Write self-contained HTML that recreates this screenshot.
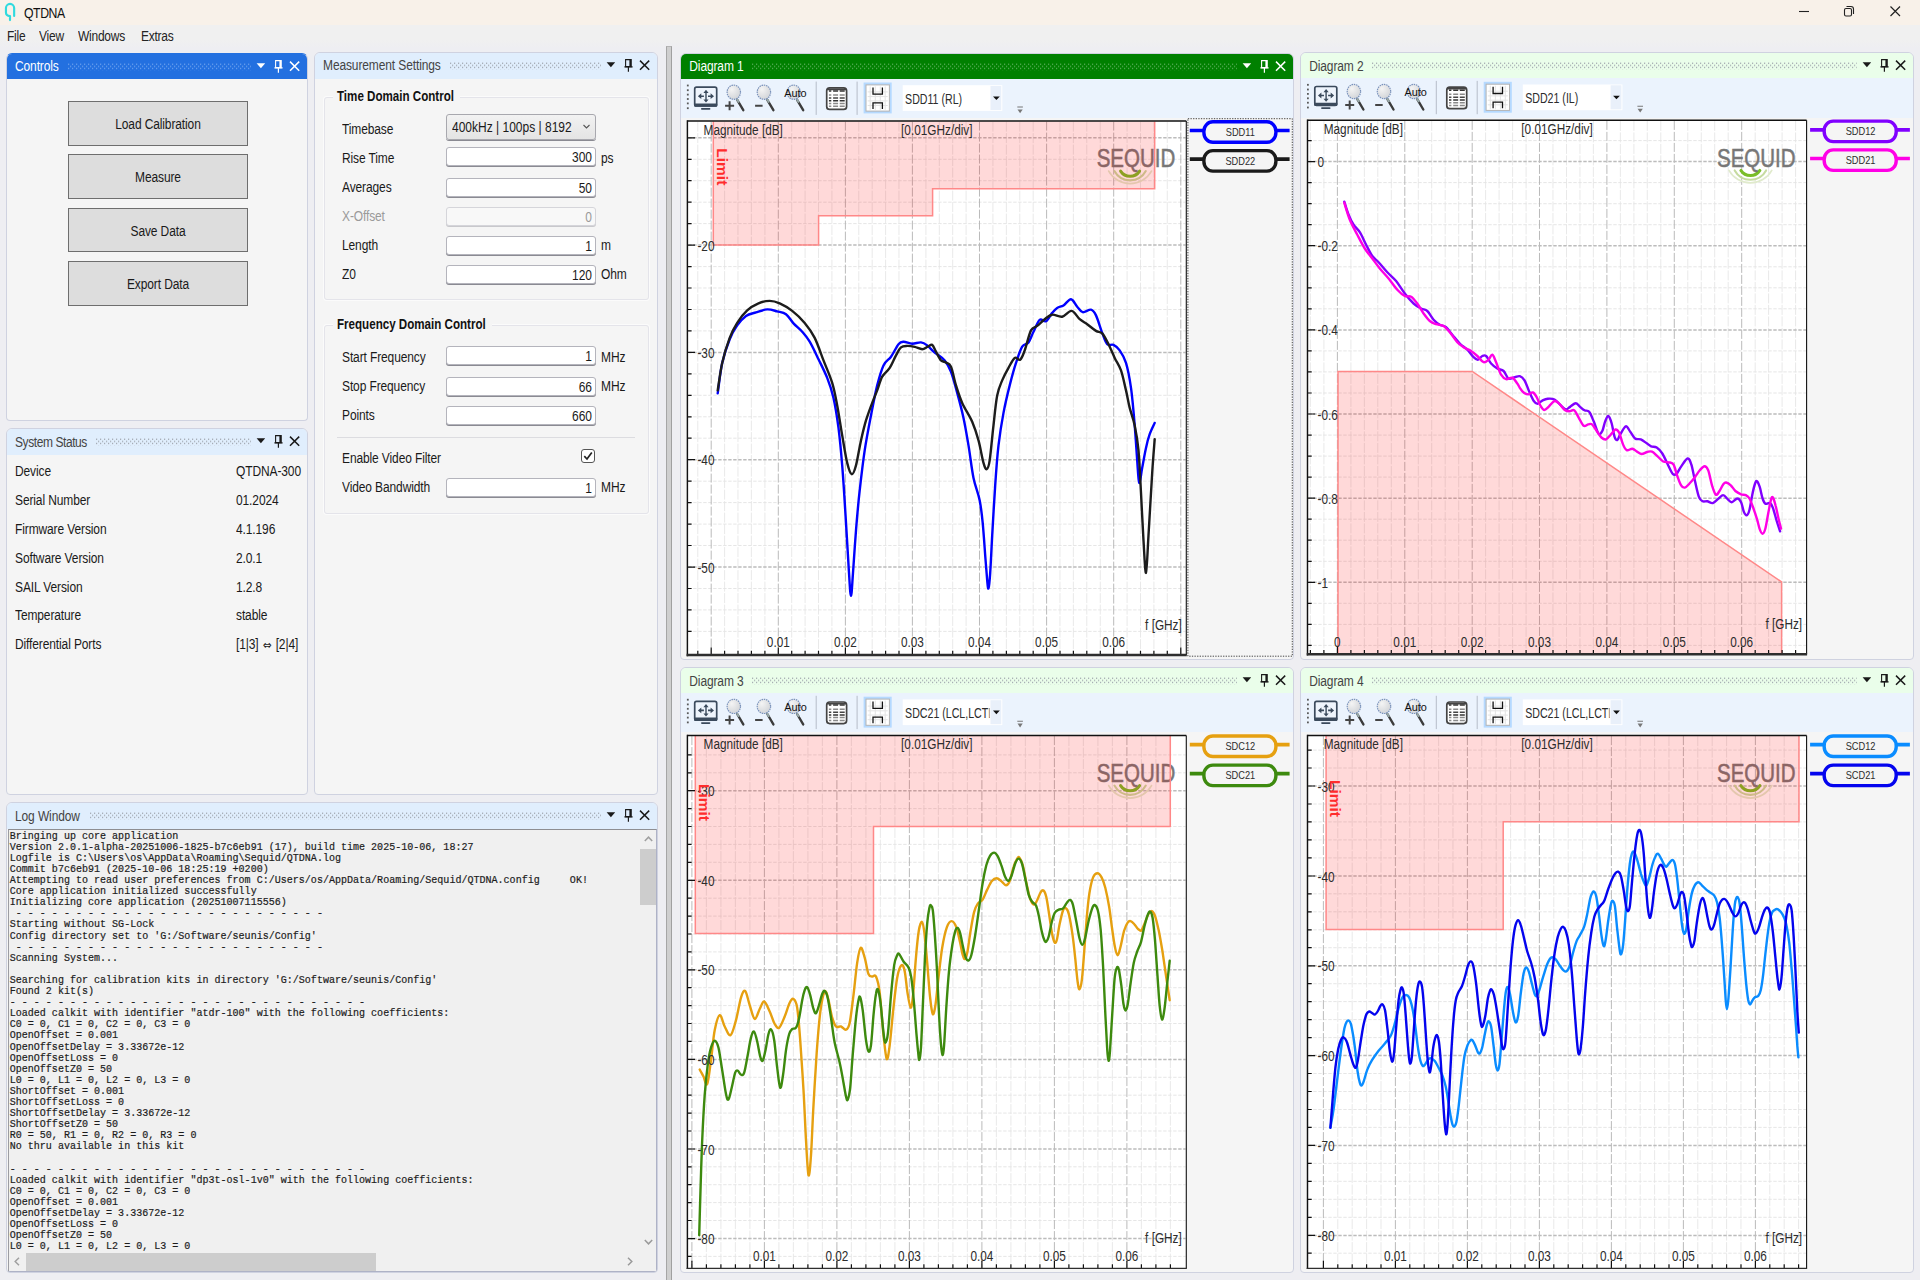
<!DOCTYPE html><html><head><meta charset="utf-8"><title>QTDNA</title><style>
*{box-sizing:border-box;margin:0;padding:0}
html,body{width:1920px;height:1280px;overflow:hidden;background:#eeeef2;font-family:"Liberation Sans",sans-serif;font-size:12px;color:#1a1a1a}
.abs{position:absolute}
#titlebar{position:absolute;left:0;top:0;width:1920px;height:25.5px;background:#f8f1e9}
#menubar{position:absolute;left:0;top:25px;width:1920px;height:22px;background:#f0f0f0}
.t{position:absolute;white-space:nowrap;letter-spacing:-0.12px;line-height:14px;height:14px;transform:scaleY(1.185);transform-origin:0 50%}
.s{display:inline-block;transform:scaleY(1.185);transform-origin:50% 50%}
.panel{position:absolute;background:#f5f5f5;border:1px solid #cfd2e0;border-radius:6px 6px 4px 4px;overflow:hidden}
.ptitle{position:absolute;left:0;top:0;right:0;height:25.6px;background:#e0eefd}
.ptitle.act,.ptitle.gact{height:25px}
.ptitle .t{top:5px;left:8px;color:#444}
.ptitle.act{background:#2370e0}
.ptitle.act .t{color:#fff}
.ptitle.grn{background:#eafeea}
.ptitle.gact{background:#008000}
.ptitle.gact .t{color:#fff}
.ptitle.grn .t,.ptitle.gact .t,.ptitle.low .t{top:5.9px}
.btn{position:absolute;background:#dddddd;border:1px solid #6e6e6e;text-align:center;line-height:45.4px;letter-spacing:-0.12px}
.inp{position:absolute;background:#fff;border:1px solid #b4b4bc;border-radius:3px;box-shadow:0 1px 0 #8a8a92;text-align:right;padding-right:3px;line-height:19px;height:19px}
.inp.dis{background:#f8f8f8;color:#9a9a9a;border-color:#d5d5da;box-shadow:0 1px 0 #c8c8cc}
.grp{position:absolute;border:1px solid #e4e4ea;border-radius:3px;box-shadow:0 0 0 1px #fbfbfb}
.grp b{position:absolute;top:-10px;left:8px;background:#f5f5f5;padding:0 6px 0 4px;font-size:11.6px;line-height:16px;color:#111;transform:scaleY(1.185);transform-origin:0 50%}
.dis{color:#9a9a9a}
#log{position:absolute;font-family:"Liberation Mono",monospace;font-size:10.05px;line-height:9.394px;white-space:pre;color:#222;transform:scaleY(1.185);transform-origin:0 0}
</style></head><body><div id="titlebar"></div><div id="menubar"></div><div class="abs" style="left:0;top:40px;width:1920px;height:8px;background:linear-gradient(#f0f0f0,#eeeef2)"></div>
<svg class="abs" style="left:0;top:0" width="20" height="25" viewBox="0 0 20 25"><path d="M14.15 15.9 V8.05 A4.1 4.1 0 0 0 5.95 8.05 V12.6 Q5.95 16 10 16.1 V20.1" fill="none" stroke="#30dade" stroke-width="2.15" stroke-linecap="round" stroke-linejoin="round"/></svg>
<div class="t " style="left:24px;top:5.5px;font-size:12.3px;color:#111;letter-spacing:-0.45px">QTDNA</div>
<div class="t " style="left:7px;top:29px;color:#242424;letter-spacing:-0.25px">File</div>
<div class="t " style="left:39px;top:29px;color:#242424;letter-spacing:-0.25px">View</div>
<div class="t " style="left:78px;top:29px;color:#242424;letter-spacing:-0.25px">Windows</div>
<div class="t " style="left:141px;top:29px;color:#242424;letter-spacing:-0.25px">Extras</div>
<svg class="abs" style="left:1790px;top:0" width="130" height="25" viewBox="0 0 130 25"><path d="M9 11.5 H19" stroke="#222" stroke-width="1.1"/><rect x="54.5" y="8.5" width="7" height="7.5" rx="1.5" fill="none" stroke="#222" stroke-width="1.1"/><path d="M56.5 6.5 H61 A2.5 2.5 0 0 1 63.5 9 V14" fill="none" stroke="#222" stroke-width="1.1"/><path d="M100.5 6.5 L110 16 M110 6.5 L100.5 16" stroke="#222" stroke-width="1.2"/></svg>
<div class="panel" style="left:6px;top:53px;width:302px;height:368px;border-color:#2370e0 #cfd2e0 #cfd2e0 #cfd2e0"><div class="ptitle act"><div class="t">Controls</div><svg class="abs" style="left:61px;top:9px" width="183" height="8" viewBox="0 0 183 8"><defs><pattern id="gp1" width="4" height="4.4" patternUnits="userSpaceOnUse"><rect x="0" y="0.6" width="1.2" height="1.2" fill="#6fa3ee"/><rect x="2" y="2.8" width="1.2" height="1.2" fill="#6fa3ee"/></pattern></defs><rect width="183" height="7.2" fill="url(#gp1)"/></svg><svg class="abs" style="left:244.4px;top:0" width="56" height="25" viewBox="0 0 56 25"><path d="M5.6 9.3 L14.2 9.3 L9.9 14.3 Z" fill="#fff"/><path d="M24.6 6.6 H30.2 V13.6 H24.6 Z" fill="none" stroke="#fff" stroke-width="1.1"/><path d="M29.3 6.6 V13.6" stroke="#fff" stroke-width="1.8"/><path d="M23.4 13.8 H31.6 M27.4 14 V18.8" stroke="#fff" stroke-width="1.2"/><path d="M39 7.6 L48.2 16.8 M48.2 7.6 L39 16.8" stroke="#fff" stroke-width="1.5"/></svg></div><div class="btn" style="left:61px;top:47.0px;width:180px;height:44.6px"><span class="s">Load Calibration</span></div><div class="btn" style="left:61px;top:100.4px;width:180px;height:44.6px"><span class="s">Measure</span></div><div class="btn" style="left:61px;top:153.8px;width:180px;height:44.6px"><span class="s">Save Data</span></div><div class="btn" style="left:61px;top:207.2px;width:180px;height:44.6px"><span class="s">Export Data</span></div></div>
<div class="panel" style="left:6px;top:428px;width:302px;height:367px;"><div class="ptitle low"><div class="t" style="letter-spacing:-0.42px">System Status</div><svg class="abs" style="left:89px;top:9px" width="155" height="8" viewBox="0 0 155 8"><defs><pattern id="gp2" width="4" height="4.4" patternUnits="userSpaceOnUse"><rect x="0" y="0.6" width="1.2" height="1.2" fill="#9aa0a8"/><rect x="2" y="2.8" width="1.2" height="1.2" fill="#9aa0a8"/></pattern></defs><rect width="155" height="7.2" fill="url(#gp2)"/></svg><svg class="abs" style="left:244.4px;top:0" width="56" height="25" viewBox="0 0 56 25"><path d="M5.6 9.3 L14.2 9.3 L9.9 14.3 Z" fill="#1a1a1a"/><path d="M24.6 6.6 H30.2 V13.6 H24.6 Z" fill="none" stroke="#1a1a1a" stroke-width="1.1"/><path d="M29.3 6.6 V13.6" stroke="#1a1a1a" stroke-width="1.8"/><path d="M23.4 13.8 H31.6 M27.4 14 V18.8" stroke="#1a1a1a" stroke-width="1.2"/><path d="M39 7.6 L48.2 16.8 M48.2 7.6 L39 16.8" stroke="#1a1a1a" stroke-width="1.5"/></svg></div><div class="t " style="left:8px;top:35.19999999999999px;">Device</div><div class="t " style="left:229px;top:35.19999999999999px;">QTDNA-300</div><div class="t " style="left:8px;top:64.02999999999997px;">Serial Number</div><div class="t " style="left:229px;top:64.02999999999997px;">01.2024</div><div class="t " style="left:8px;top:92.86000000000001px;">Firmware Version</div><div class="t " style="left:229px;top:92.86000000000001px;">4.1.196</div><div class="t " style="left:8px;top:121.68999999999994px;">Software Version</div><div class="t " style="left:229px;top:121.68999999999994px;">2.0.1</div><div class="t " style="left:8px;top:150.51999999999998px;">SAIL Version</div><div class="t " style="left:229px;top:150.51999999999998px;">1.2.8</div><div class="t " style="left:8px;top:179.3499999999999px;">Temperature</div><div class="t " style="left:229px;top:179.3499999999999px;">stable</div><div class="t " style="left:8px;top:208.17999999999995px;">Differential Ports</div><div class="t " style="left:229px;top:208.17999999999995px;">[1|3] <span style="font-family:'DejaVu Sans',sans-serif;font-size:10.5px;position:relative;top:0.3px;margin:0 1px">&#8660;</span> [2|4]</div></div>
<div class="panel" style="left:314px;top:52.3px;width:344px;height:742.7px;"><div class="ptitle "><div class="t">Measurement Settings</div><svg class="abs" style="left:135px;top:9px" width="151" height="8" viewBox="0 0 151 8"><defs><pattern id="gp3" width="4" height="4.4" patternUnits="userSpaceOnUse"><rect x="0" y="0.6" width="1.2" height="1.2" fill="#9aa0a8"/><rect x="2" y="2.8" width="1.2" height="1.2" fill="#9aa0a8"/></pattern></defs><rect width="151" height="7.2" fill="url(#gp3)"/></svg><svg class="abs" style="left:286.4px;top:0" width="56" height="25" viewBox="0 0 56 25"><path d="M5.6 9.3 L14.2 9.3 L9.9 14.3 Z" fill="#1a1a1a"/><path d="M24.6 6.6 H30.2 V13.6 H24.6 Z" fill="none" stroke="#1a1a1a" stroke-width="1.1"/><path d="M29.3 6.6 V13.6" stroke="#1a1a1a" stroke-width="1.8"/><path d="M23.4 13.8 H31.6 M27.4 14 V18.8" stroke="#1a1a1a" stroke-width="1.2"/><path d="M39 7.6 L48.2 16.8 M48.2 7.6 L39 16.8" stroke="#1a1a1a" stroke-width="1.5"/></svg></div><div class="grp" style="left:9px;top:43.7px;width:325px;height:203px"><b>Time Domain Control</b></div><div class="grp" style="left:9px;top:271.7px;width:325px;height:189px"><b>Frequency Domain Control</b></div><div class="t " style="left:27px;top:68.7px;">Timebase</div><div class="abs" style="left:131px;top:61.1px;width:150px;height:26px;border:1px solid #a8a8ae;border-radius:3px;background:linear-gradient(#f2f2f2,#e4e4e4);line-height:24px;padding-left:5px;box-shadow:0 1px 0 #8a8a92"><span class="s">400kHz | 100ps | 8192</span><svg class="abs" style="right:4px;top:8px" width="9" height="8" viewBox="0 0 9 8"><path d="M1.5 2 L4.5 5 L7.5 2" fill="none" stroke="#555" stroke-width="1.1"/></svg></div><div class="t " style="left:27px;top:97.7px;">Rise Time</div><div class="inp" style="left:131px;top:93.3px;width:150px"><span class="s">300</span></div><div class="t " style="left:286px;top:97.7px;">ps</div><div class="t " style="left:27px;top:126.7px;">Averages</div><div class="inp" style="left:131px;top:124.9px;width:150px"><span class="s">50</span></div><div class="t dis" style="left:27px;top:155.7px;">X-Offset</div><div class="inp dis" style="left:131px;top:153.6px;width:150px"><span class="s">0</span></div><div class="t " style="left:27px;top:184.7px;">Length</div><div class="inp" style="left:131px;top:182.5px;width:150px"><span class="s">1</span></div><div class="t " style="left:286px;top:184.7px;">m</div><div class="t " style="left:27px;top:213.7px;">Z0</div><div class="inp" style="left:131px;top:211.5px;width:150px"><span class="s">120</span></div><div class="t " style="left:286px;top:213.7px;">Ohm</div><div class="t " style="left:27px;top:296.7px;">Start Frequency</div><div class="inp" style="left:131px;top:293.1px;width:150px"><span class="s">1</span></div><div class="t " style="left:286px;top:296.7px;">MHz</div><div class="t " style="left:27px;top:325.7px;">Stop Frequency</div><div class="inp" style="left:131px;top:324.1px;width:150px"><span class="s">66</span></div><div class="t " style="left:286px;top:325.7px;">MHz</div><div class="t " style="left:27px;top:354.7px;">Points</div><div class="inp" style="left:131px;top:353.1px;width:150px"><span class="s">660</span></div><div class="abs" style="left:22px;top:383.7px;width:298px;height:1px;background:#dcdce0"></div><div class="t " style="left:27px;top:397.7px;">Enable Video Filter</div><div class="abs" style="left:266px;top:395.7px;width:14px;height:14px;border:1px solid #555;border-radius:3px;background:#fff"><svg width="12" height="12" viewBox="0 0 12 12" style="display:block"><path d="M2.3 6.2 L5 9 L9.8 2.6" fill="none" stroke="#222" stroke-width="1.7"/></svg></div><div class="t " style="left:27px;top:426.7px;">Video Bandwidth</div><div class="inp" style="left:131px;top:424.7px;width:150px"><span class="s">1</span></div><div class="t " style="left:286px;top:426.7px;">MHz</div></div>
<div class="panel" style="left:6px;top:802px;width:652px;height:471px;"><div class="ptitle low"><div class="t">Log Window</div><svg class="abs" style="left:83px;top:9px" width="511" height="8" viewBox="0 0 511 8"><defs><pattern id="gp4" width="4" height="4.4" patternUnits="userSpaceOnUse"><rect x="0" y="0.6" width="1.2" height="1.2" fill="#9aa0a8"/><rect x="2" y="2.8" width="1.2" height="1.2" fill="#9aa0a8"/></pattern></defs><rect width="511" height="7.2" fill="url(#gp4)"/></svg><svg class="abs" style="left:594.4px;top:0" width="56" height="25" viewBox="0 0 56 25"><path d="M5.6 9.3 L14.2 9.3 L9.9 14.3 Z" fill="#1a1a1a"/><path d="M24.6 6.6 H30.2 V13.6 H24.6 Z" fill="none" stroke="#1a1a1a" stroke-width="1.1"/><path d="M29.3 6.6 V13.6" stroke="#1a1a1a" stroke-width="1.8"/><path d="M23.4 13.8 H31.6 M27.4 14 V18.8" stroke="#1a1a1a" stroke-width="1.2"/><path d="M39 7.6 L48.2 16.8 M48.2 7.6 L39 16.8" stroke="#1a1a1a" stroke-width="1.5"/></svg></div><div class="abs" style="left:1px;top:25.5px;width:649px;height:443px;background:#f0f0f0;border-top:1px solid #8e8e92;border-right:1.5px solid #aeb2c6;border-bottom:1.5px solid #aeb2c6;border-left:1px solid #9c9ca2;overflow:hidden"><svg class="abs" style="left:0;top:0" width="632" height="424" font-family="Liberation Mono, monospace" font-size="10.05" fill="#1c1c1c" stroke="#1c1c1c" stroke-width="0.18"><text transform="translate(0.7 4.90) scale(1 1.12)" y="3.3" xml:space="preserve">Bringing up core application</text><text transform="translate(0.7 16.00) scale(1 1.12)" y="3.3" xml:space="preserve">Version 2.0.1-alpha-20251006-1825-b7c6eb91 (17), build time 2025-10-06, 18:27</text><text transform="translate(0.7 27.10) scale(1 1.12)" y="3.3" xml:space="preserve">Logfile is C:\Users\os\AppData\Roaming\Sequid/QTDNA.log</text><text transform="translate(0.7 38.20) scale(1 1.12)" y="3.3" xml:space="preserve">Commit b7c6eb91 (2025-10-06 18:25:19 +0200)</text><text transform="translate(0.7 49.30) scale(1 1.12)" y="3.3" xml:space="preserve">Attempting to read user preferences from C:/Users/os/AppData/Roaming/Sequid/QTDNA.config     OK!</text><text transform="translate(0.7 60.40) scale(1 1.12)" y="3.3" xml:space="preserve">Core application initialized successfully</text><text transform="translate(0.7 71.50) scale(1 1.12)" y="3.3" xml:space="preserve">Initializing core application (20251007115556)</text><text transform="translate(0.7 82.60) scale(1 1.12)" y="3.3" xml:space="preserve"> - - - - - - - - - - - - - - - - - - - - - - - - - - </text><text transform="translate(0.7 93.70) scale(1 1.12)" y="3.3" xml:space="preserve">Starting without SG-Lock</text><text transform="translate(0.7 104.80) scale(1 1.12)" y="3.3" xml:space="preserve">Config directory set to 'G:/Software/seunis/Config'</text><text transform="translate(0.7 115.90) scale(1 1.12)" y="3.3" xml:space="preserve"> - - - - - - - - - - - - - - - - - - - - - - - - - - </text><text transform="translate(0.7 127.00) scale(1 1.12)" y="3.3" xml:space="preserve">Scanning System...</text><text transform="translate(0.7 149.20) scale(1 1.12)" y="3.3" xml:space="preserve">Searching for calibration kits in directory 'G:/Software/seunis/Config'</text><text transform="translate(0.7 160.30) scale(1 1.12)" y="3.3" xml:space="preserve">Found 2 kit(s)</text><text transform="translate(0.7 171.40) scale(1 1.12)" y="3.3" xml:space="preserve">- - - - - - - - - - - - - - - - - - - - - - - - - - - - - -</text><text transform="translate(0.7 182.50) scale(1 1.12)" y="3.3" xml:space="preserve">Loaded calkit with identifier "atdr-100" with the following coefficients:</text><text transform="translate(0.7 193.60) scale(1 1.12)" y="3.3" xml:space="preserve">C0 = 0, C1 = 0, C2 = 0, C3 = 0</text><text transform="translate(0.7 204.70) scale(1 1.12)" y="3.3" xml:space="preserve">OpenOffset = 0.001</text><text transform="translate(0.7 215.80) scale(1 1.12)" y="3.3" xml:space="preserve">OpenOffsetDelay = 3.33672e-12</text><text transform="translate(0.7 226.90) scale(1 1.12)" y="3.3" xml:space="preserve">OpenOffsetLoss = 0</text><text transform="translate(0.7 238.00) scale(1 1.12)" y="3.3" xml:space="preserve">OpenOffsetZ0 = 50</text><text transform="translate(0.7 249.10) scale(1 1.12)" y="3.3" xml:space="preserve">L0 = 0, L1 = 0, L2 = 0, L3 = 0</text><text transform="translate(0.7 260.20) scale(1 1.12)" y="3.3" xml:space="preserve">ShortOffset = 0.001</text><text transform="translate(0.7 271.30) scale(1 1.12)" y="3.3" xml:space="preserve">ShortOffsetLoss = 0</text><text transform="translate(0.7 282.40) scale(1 1.12)" y="3.3" xml:space="preserve">ShortOffsetDelay = 3.33672e-12</text><text transform="translate(0.7 293.50) scale(1 1.12)" y="3.3" xml:space="preserve">ShortOffsetZ0 = 50</text><text transform="translate(0.7 304.60) scale(1 1.12)" y="3.3" xml:space="preserve">R0 = 50, R1 = 0, R2 = 0, R3 = 0</text><text transform="translate(0.7 315.70) scale(1 1.12)" y="3.3" xml:space="preserve">No thru available in this kit</text><text transform="translate(0.7 337.90) scale(1 1.12)" y="3.3" xml:space="preserve">- - - - - - - - - - - - - - - - - - - - - - - - - - - - - -</text><text transform="translate(0.7 349.00) scale(1 1.12)" y="3.3" xml:space="preserve">Loaded calkit with identifier "dp3t-osl-1v0" with the following coefficients:</text><text transform="translate(0.7 360.10) scale(1 1.12)" y="3.3" xml:space="preserve">C0 = 0, C1 = 0, C2 = 0, C3 = 0</text><text transform="translate(0.7 371.20) scale(1 1.12)" y="3.3" xml:space="preserve">OpenOffset = 0.001</text><text transform="translate(0.7 382.30) scale(1 1.12)" y="3.3" xml:space="preserve">OpenOffsetDelay = 3.33672e-12</text><text transform="translate(0.7 393.40) scale(1 1.12)" y="3.3" xml:space="preserve">OpenOffsetLoss = 0</text><text transform="translate(0.7 404.50) scale(1 1.12)" y="3.3" xml:space="preserve">OpenOffsetZ0 = 50</text><text transform="translate(0.7 415.60) scale(1 1.12)" y="3.3" xml:space="preserve">L0 = 0, L1 = 0, L2 = 0, L3 = 0</text></svg><div class="abs" style="left:631px;top:0;width:17px;height:423px;background:#f0f0f0"><div class="abs" style="left:0;top:19px;width:17px;height:56px;background:#cdcdcd"></div><svg class="abs" style="left:4px;top:6px" width="9" height="6" viewBox="0 0 9 6"><path d="M0.8 5 L4.5 1.2 L8.2 5" fill="none" stroke="#a0a0a0" stroke-width="1.5"/></svg><svg class="abs" style="left:4px;top:409px" width="9" height="6" viewBox="0 0 9 6"><path d="M0.8 1 L4.5 4.8 L8.2 1" fill="none" stroke="#9a9a9a" stroke-width="1.5"/></svg></div><div class="abs" style="left:0;top:423px;width:631px;height:18px;background:#f0f0f0"><div class="abs" style="left:17px;top:0;width:350px;height:18px;background:#cdcdcd"></div><svg class="abs" style="left:5px;top:4px" width="6" height="9" viewBox="0 0 6 9"><path d="M5 0.8 L1.2 4.5 L5 8.2" fill="none" stroke="#a0a0a0" stroke-width="1.5"/></svg><svg class="abs" style="left:618px;top:4px" width="6" height="9" viewBox="0 0 6 9"><path d="M1 0.8 L4.8 4.5 L1 8.2" fill="none" stroke="#9a9a9a" stroke-width="1.5"/></svg></div></div></div>
<div class="abs" style="left:666px;top:45.5px;width:6px;height:1235px;background:#cfcfcf;border-left:1px solid #a6a6a6;border-right:1px solid #a0a0a0;border-top:1px solid #b4b4b4"></div>
<div class="panel" style="left:680.3px;top:52.6px;width:613.6px;height:607.0px"><div class="ptitle gact"><div class="t">Diagram 1</div><svg class="abs" style="left:70.7px;top:9px" width="484.90000000000003" height="8" viewBox="0 0 484.90000000000003 8"><defs><pattern id="gp5" width="4" height="4.4" patternUnits="userSpaceOnUse"><rect x="0" y="0.6" width="1.2" height="1.2" fill="#5fb05f"/><rect x="2" y="2.8" width="1.2" height="1.2" fill="#5fb05f"/></pattern></defs><rect width="484.90000000000003" height="7.2" fill="url(#gp5)"/></svg><svg class="abs" style="left:556.0px;top:0" width="56" height="25" viewBox="0 0 56 25"><path d="M5.6 9.3 L14.2 9.3 L9.9 14.3 Z" fill="#fff"/><path d="M24.6 6.6 H30.2 V13.6 H24.6 Z" fill="none" stroke="#fff" stroke-width="1.1"/><path d="M29.3 6.6 V13.6" stroke="#fff" stroke-width="1.8"/><path d="M23.4 13.8 H31.6 M27.4 14 V18.8" stroke="#fff" stroke-width="1.2"/><path d="M39 7.6 L48.2 16.8 M48.2 7.6 L39 16.8" stroke="#fff" stroke-width="1.5"/></svg></div><div class="abs" style="left:0;top:25px;width:613.6px;height:39.0px;background:#ebf3fd"></div><svg class="abs" style="left:-1px;top:-1px" width="613.6" height="607.0" viewBox="680.3 52.6 613.6 607.0" font-family="Liberation Sans, sans-serif"><defs><radialGradient id="lens1" cx="0.35" cy="0.3" r="0.8"><stop offset="0" stop-color="#f4f4f4"/><stop offset="1" stop-color="#cfd2d6"/></radialGradient></defs><g transform="translate(0 0)"><rect x="687.2" y="84.2" width="1.8" height="1.8" fill="#5a5a5a"/><rect x="687.2" y="88.9" width="1.8" height="1.8" fill="#5a5a5a"/><rect x="687.2" y="93.3" width="1.8" height="1.8" fill="#5a5a5a"/><rect x="687.2" y="97.7" width="1.8" height="1.8" fill="#5a5a5a"/><rect x="687.2" y="102.1" width="1.8" height="1.8" fill="#5a5a5a"/><rect x="687.2" y="106.9" width="1.8" height="1.8" fill="#5a5a5a"/><rect x="695" y="86.8" width="22" height="18.8" rx="1.8" fill="#eef4fc" stroke="#3b4a5c" stroke-width="1.7"/><rect x="694.4" y="103" width="23.2" height="3.4" rx="1" fill="#3b4a5c"/><rect x="701.3" y="107.6" width="9.4" height="1.7" rx="0.8" fill="#3b4a5c"/><path d="M706.3 89.4 L708.9 92.6 H707 V99 H708.9 L706.3 102 L703.7 99 H705.6 V92.6 H703.7 Z" fill="#3b4a5c"/><path d="M698.2 95.8 L701.6 92.9 V95 H704.2 V96.6 H701.6 V98.7 Z M714.3 95.8 L710.9 92.9 V95 H708.3 V96.6 H710.9 V98.7 Z" fill="#3b4a5c"/><path d="M737.5 99.4 L743.6 109.8" stroke="#3c3c3c" stroke-width="2.4" stroke-linecap="round"/><path d="M737.1 98.6 L739.3 102.2" stroke="#9aa" stroke-width="2"/><ellipse cx="734.1" cy="91.8" rx="6.7" ry="7.1" fill="url(#lens1)" stroke="#7a92bb" stroke-width="1.2" stroke-dasharray="1.5 0.8"/><path d="M767.6 99.4 L773.7 109.8" stroke="#3c3c3c" stroke-width="2.4" stroke-linecap="round"/><path d="M767.2 98.6 L769.4 102.2" stroke="#9aa" stroke-width="2"/><ellipse cx="764.2" cy="91.8" rx="6.7" ry="7.1" fill="url(#lens1)" stroke="#7a92bb" stroke-width="1.2" stroke-dasharray="1.5 0.8"/><path d="M797.4 99.4 L803.5 109.8" stroke="#3c3c3c" stroke-width="2.4" stroke-linecap="round"/><path d="M797.0 98.6 L799.2 102.2" stroke="#9aa" stroke-width="2"/><ellipse cx="794.0" cy="91.8" rx="6.7" ry="7.1" fill="url(#lens1)" stroke="#7a92bb" stroke-width="1.2" stroke-dasharray="1.5 0.8"/><path d="M725.4 105.4 H734.4 M729.9 100.8 V109.9" stroke="#444" stroke-width="2"/><path d="M755.4 105.4 H762.9" stroke="#444" stroke-width="2"/><text x="784.6" y="96.3" font-size="10.6" fill="#111" textLength="22.4" lengthAdjust="spacingAndGlyphs">Auto</text><path d="M816.5 81.2 V114.5 M857.4 81.2 V114.5" stroke="#b5bcc8" stroke-width="1"/><rect x="827" y="87.4" width="19.9" height="21.6" rx="3" fill="#fff" stroke="#444" stroke-width="1.7"/><path d="M827.5 89 H846.5" stroke="#444" stroke-width="1.6"/><path d="M829.2 90.5 H831.6 M833.4 90.5 H838.4 M840 90.5 H845" stroke="#333" stroke-width="1.5"/><path d="M829.2 94.6 H831.6 M833.4 94.6 H838.4 M840 94.6 H845" stroke="#8a8a8a" stroke-width="1.5"/><path d="M829.2 97.6 H831.6 M833.4 97.6 H838.4 M840 97.6 H845" stroke="#444" stroke-width="1.5"/><path d="M829.2 100.4 H831.6 M833.4 100.4 H838.4 M840 100.4 H845" stroke="#333" stroke-width="1.5"/><path d="M829.2 103 H831.6 M833.4 103 H838.4 M840 103 H845" stroke="#8a8a8a" stroke-width="1.5"/><path d="M829.2 105.9 H831.6 M833.4 105.9 H838.4 M840 105.9 H845" stroke="#8a8a8a" stroke-width="1.5"/><rect x="863.9" y="82.1" width="28.1" height="30.9" fill="#b5d9ff"/><rect x="866.3" y="84.5" width="23.4" height="26.2" fill="#fff" stroke="#b4b4b4" stroke-width="1"/><path d="M868 91.5 H888 M868 96.2 H888 M868 100.5 H888 M868 105.1 H888 M870.5 86 V109.5 M875.6 86 V109.5 M880.6 86 V109.5 M885.5 86 V109.5" stroke="#e3e3e3" stroke-width="1"/><path d="M873.3 87 V93.8 H882.7 V87 M873.3 108.6 V102.5 H882.7 V108.6" fill="none" stroke="#111" stroke-width="1.3"/><rect x="903" y="84.8" width="99.6" height="25.7" fill="#fff"/><rect x="990.8" y="85.6" width="10.8" height="24" fill="#e9f0fa"/><path d="M993.3 96 H1000.1 L996.7 99.6 Z" fill="#111"/><path d="M1017.6 106.6 H1023.2" stroke="#777" stroke-width="1.1"/><path d="M1017.8 109 H1023 L1020.4 112.8 Z" fill="#777"/></g><clipPath id="cc1"><rect x="902.3" y="84.4" width="87.6" height="25.7"/></clipPath><g clip-path="url(#cc1)"><text transform="translate(905.4 98.3) scale(0.9 1.185)" y="4.25" text-anchor="start" font-size="11.8" fill="#2c2c2c" >SDD11 (RL)</text></g><defs><clipPath id="cp1"><rect x="688.5" y="121.2" width="497.6" height="532.1"/></clipPath></defs><rect x="687.7" y="120.5" width="498.9" height="534.1" fill="#fff"/><g clip-path="url(#cp1)"><path d="M698.1 121.2V653.4M724.9 121.2V653.4M738.3 121.2V653.4M751.7 121.2V653.4M765.2 121.2V653.4M792.0 121.2V653.4M805.4 121.2V653.4M818.8 121.2V653.4M832.2 121.2V653.4M859.1 121.2V653.4M872.5 121.2V653.4M885.9 121.2V653.4M899.3 121.2V653.4M926.2 121.2V653.4M939.6 121.2V653.4M953.0 121.2V653.4M966.4 121.2V653.4M993.2 121.2V653.4M1006.7 121.2V653.4M1020.1 121.2V653.4M1033.5 121.2V653.4M1060.3 121.2V653.4M1073.7 121.2V653.4M1087.1 121.2V653.4M1100.6 121.2V653.4M1127.4 121.2V653.4M1140.8 121.2V653.4M1154.2 121.2V653.4M1167.6 121.2V653.4" stroke="#e6e6e6" stroke-width="0.9" stroke-dasharray="10 1.5" fill="none"/><path d="M688.5 158.9H1186.1M688.5 180.3H1186.1M688.5 201.8H1186.1M688.5 223.2H1186.1M688.5 266.2H1186.1M688.5 287.6H1186.1M688.5 309.1H1186.1M688.5 330.5H1186.1M688.5 373.5H1186.1M688.5 394.9H1186.1M688.5 416.4H1186.1M688.5 437.8H1186.1M688.5 480.8H1186.1M688.5 502.2H1186.1M688.5 523.7H1186.1M688.5 545.1H1186.1M688.5 588.1H1186.1M688.5 609.5H1186.1M688.5 631.0H1186.1" stroke="#e5e5e5" stroke-width="0.95" stroke-dasharray="3.4 1.6" fill="none"/><path d="M711.5 121.2V653.4M778.6 121.2V653.4M845.7 121.2V653.4M912.7 121.2V653.4M979.8 121.2V653.4M1046.9 121.2V653.4M1114.0 121.2V653.4M1181.1 121.2V653.4" stroke="#b2b2b2" stroke-width="0.9" stroke-dasharray="9 2" fill="none"/><path d="M688.5 137.4H1186.1M688.5 244.7H1186.1M688.5 352.0H1186.1M688.5 459.3H1186.1M688.5 566.7H1186.1" stroke="#bcbcbc" stroke-width="1.5" stroke-dasharray="3.4 1.6" fill="none"/><path d="M1120.9 170.7 A11.3 11.3 0 0 0 1139.9 170.7" fill="none" stroke="#7abd28" stroke-opacity="1" stroke-width="3.0" stroke-linecap="round"/><path d="M1114.7 170.7 A17.9 17.9 0 0 0 1146.1 170.7" fill="none" stroke="#c6dba0" stroke-opacity="1" stroke-width="2.1" stroke-linecap="round"/><path d="M1109.0 170.7 A24.5 24.5 0 0 0 1151.8 170.7" fill="none" stroke="#e0eacc" stroke-opacity="1" stroke-width="1.7" stroke-linecap="round"/><text x="1097.0" y="166.9" font-size="25.4" fill="#777" stroke="#777" stroke-width="0.55" textLength="78.5" lengthAdjust="spacingAndGlyphs">SEQUID</text><polygon points="713.6,118.5 1155.0,118.5 1155.0,188.4 932.9,188.4 932.9,215.4 818.9,215.4 818.9,244.6 713.6,244.6" fill="#ff0000" fill-opacity="0.15" stroke="#ff8888" stroke-width="1.5"/><path d="M718.0 393.0C718.8 387.9 720.5 371.5 722.5 362.5C724.5 353.5 727.5 345.1 730.0 338.8C732.5 332.6 734.8 328.9 737.5 325.0C740.2 321.1 743.2 317.7 746.3 315.5C749.4 313.3 752.8 313.1 756.3 312.0C759.8 310.9 764.0 309.2 767.5 309.0C771.0 308.8 774.4 310.2 777.5 311.0C780.6 311.8 783.6 311.8 786.3 313.8C789.0 315.8 791.1 320.1 793.8 323.0C796.5 325.9 799.8 328.2 802.5 331.3C805.2 334.4 807.3 336.7 810.0 341.3C812.7 345.9 815.9 352.8 818.8 358.8C821.7 364.8 825.0 371.1 827.5 377.5C830.0 383.9 831.9 389.2 833.8 397.5C835.7 405.8 837.3 416.2 838.8 427.5C840.2 438.8 841.2 449.2 842.5 465.0C843.8 480.8 845.2 504.6 846.3 522.5C847.4 540.4 848.5 560.3 849.3 572.5C850.1 584.7 850.6 595.5 851.3 595.5C852.0 595.5 852.5 583.4 853.3 572.5C854.1 561.6 855.2 543.8 856.3 530.0C857.4 516.2 858.5 503.3 860.0 490.0C861.5 476.7 863.1 462.5 865.0 450.0C866.9 437.5 869.2 425.8 871.3 415.0C873.4 404.2 875.4 393.3 877.5 385.0C879.6 376.7 881.5 369.8 883.8 365.0C886.1 360.2 888.8 359.8 891.3 356.3C893.8 352.8 896.7 346.3 898.8 343.8C900.9 341.3 901.5 341.4 903.8 341.3C906.1 341.2 909.6 343.2 912.5 343.3C915.4 343.4 918.8 341.7 921.3 342.0C923.8 342.3 925.4 343.4 927.5 345.0C929.6 346.6 932.1 349.8 933.8 351.3C935.5 352.8 935.6 352.4 937.5 353.8C939.4 355.2 942.7 357.1 945.0 360.0C947.3 362.9 949.2 365.9 951.3 371.3C953.4 376.7 955.4 384.8 957.5 392.5C959.6 400.2 961.9 408.8 963.8 417.5C965.7 426.2 967.1 435.0 968.8 445.0C970.5 455.0 971.9 468.3 973.8 477.5C975.7 486.7 978.5 492.5 980.0 500.0C981.5 507.5 982.1 513.3 983.0 522.5C983.9 531.7 984.8 545.4 985.5 555.0C986.2 564.6 987.0 574.5 987.5 580.0C988.0 585.5 988.3 589.2 988.8 588.0C989.3 586.8 989.9 581.3 990.5 572.5C991.1 563.7 991.7 549.6 992.5 535.0C993.3 520.4 994.5 500.0 995.5 485.0C996.5 470.0 997.4 457.1 998.8 445.0C1000.2 432.9 1001.9 422.5 1003.8 412.5C1005.7 402.5 1007.9 393.3 1010.0 385.0C1012.1 376.7 1014.2 368.9 1016.3 362.5C1018.4 356.1 1020.4 349.7 1022.5 346.3C1024.6 342.9 1026.9 344.5 1028.8 342.0C1030.7 339.5 1031.9 335.1 1033.8 331.3C1035.7 327.6 1037.9 321.2 1040.0 319.5C1042.1 317.8 1044.2 322.0 1046.3 320.8C1048.4 319.6 1050.6 314.7 1052.5 312.5C1054.4 310.3 1055.6 308.8 1057.5 307.5C1059.4 306.2 1061.5 306.4 1063.8 305.0C1066.1 303.6 1069.0 298.6 1071.3 298.8C1073.6 299.0 1075.5 304.1 1077.5 306.3C1079.5 308.5 1080.7 311.3 1083.0 311.8C1085.3 312.3 1089.1 308.8 1091.3 309.3C1093.5 309.8 1094.4 311.1 1096.3 315.0C1098.2 318.9 1100.6 327.7 1102.5 332.5C1104.4 337.3 1105.6 341.8 1107.5 343.8C1109.4 345.8 1111.7 343.5 1113.8 344.5C1115.9 345.5 1117.9 347.0 1120.0 350.0C1122.1 353.0 1124.4 356.2 1126.3 362.5C1128.2 368.8 1129.8 377.1 1131.3 387.5C1132.8 397.9 1134.0 412.9 1135.0 425.0C1136.0 437.1 1136.8 450.4 1137.5 460.0C1138.2 469.6 1138.7 481.2 1139.5 482.5C1140.3 483.8 1141.4 473.3 1142.5 467.5C1143.6 461.7 1145.0 453.1 1146.3 447.5C1147.5 441.9 1148.5 438.0 1150.0 433.8C1151.5 429.6 1154.2 424.4 1155.0 422.5" fill="none" stroke="#0000ff" stroke-width="2.4" stroke-linejoin="round" stroke-linecap="round"/><path d="M718.0 390.0C718.8 385.4 720.5 371.2 722.5 362.5C724.5 353.8 727.5 344.2 730.0 337.5C732.5 330.8 734.6 327.1 737.5 322.5C740.4 317.9 744.0 313.2 747.5 310.0C751.0 306.8 755.0 304.6 758.8 303.0C762.5 301.4 766.5 300.5 770.0 300.5C773.5 300.5 776.2 301.3 780.0 303.0C783.8 304.7 788.3 307.2 792.5 310.5C796.7 313.8 801.2 318.0 805.0 322.5C808.8 327.0 811.9 331.2 815.0 337.5C818.1 343.8 820.9 352.5 823.8 360.0C826.7 367.5 830.2 375.0 832.5 382.5C834.8 390.0 835.8 396.2 837.5 405.0C839.2 413.8 840.8 425.4 842.5 435.0C844.2 444.6 845.9 456.0 847.5 462.5C849.1 469.0 850.5 473.4 852.0 473.8C853.5 474.2 854.8 470.6 856.3 465.0C857.8 459.4 859.6 447.5 861.3 440.0C863.0 432.5 864.4 426.2 866.3 420.0C868.2 413.8 870.6 407.5 872.5 402.5C874.4 397.5 875.8 394.4 877.5 390.0C879.2 385.6 880.4 380.1 882.5 376.3C884.6 372.6 887.7 371.1 890.0 367.5C892.3 363.9 894.4 358.4 896.3 355.0C898.2 351.6 899.4 348.6 901.3 347.0C903.2 345.4 905.2 345.6 907.5 345.5C909.8 345.4 912.5 345.9 915.0 346.5C917.5 347.1 920.3 348.8 922.5 348.8C924.7 348.8 926.3 347.0 928.0 346.3C929.7 345.6 931.1 343.7 932.5 344.5C933.9 345.3 934.8 348.7 936.3 351.3C937.8 353.9 939.6 358.2 941.3 360.0C943.0 361.8 944.6 360.9 946.3 362.0C948.0 363.1 949.6 362.5 951.3 366.3C953.0 370.1 954.4 379.0 956.3 385.0C958.2 391.0 959.8 396.4 962.5 402.5C965.2 408.6 969.8 415.1 972.5 421.3C975.2 427.6 976.9 433.1 978.8 440.0C980.7 446.9 982.4 457.7 983.8 462.5C985.2 467.3 986.0 469.2 987.0 468.8C988.0 468.4 988.9 467.3 990.0 460.0C991.1 452.7 992.5 435.8 993.8 425.0C995.0 414.2 996.0 402.5 997.5 395.0C999.0 387.5 1000.6 384.6 1002.5 380.0C1004.4 375.4 1006.7 371.2 1008.8 367.5C1010.9 363.8 1013.0 358.9 1015.0 357.5C1017.0 356.1 1018.8 360.6 1020.5 359.3C1022.2 358.1 1023.2 354.9 1025.0 350.0C1026.8 345.1 1029.2 334.1 1031.3 330.0C1033.4 325.9 1035.2 327.4 1037.5 325.5C1039.8 323.6 1042.5 320.7 1045.0 318.8C1047.5 316.9 1049.6 314.7 1052.5 314.3C1055.4 313.9 1059.2 316.9 1062.5 316.3C1065.8 315.7 1069.1 310.1 1072.0 310.5C1074.9 310.9 1077.4 316.6 1080.0 318.8C1082.6 321.0 1084.8 321.9 1087.5 323.8C1090.2 325.8 1093.8 329.0 1096.3 330.5C1098.8 332.0 1100.4 330.8 1102.5 333.0C1104.6 335.2 1106.7 339.7 1108.8 343.8C1110.9 347.9 1112.9 353.1 1115.0 357.5C1117.1 361.9 1119.4 364.6 1121.3 370.0C1123.2 375.4 1124.8 383.8 1126.3 390.0C1127.8 396.2 1128.5 401.7 1130.0 407.5C1131.5 413.3 1133.5 417.9 1135.0 425.0C1136.5 432.1 1137.8 438.8 1138.8 450.0C1139.8 461.2 1140.5 477.5 1141.3 492.5C1142.1 507.5 1143.0 526.7 1143.8 540.0C1144.6 553.3 1145.5 573.3 1146.3 572.5C1147.1 571.7 1147.8 551.7 1148.8 535.0C1149.8 518.3 1151.5 488.5 1152.5 472.5C1153.5 456.5 1154.6 444.4 1155.0 438.8" fill="none" stroke="#1c1c1c" stroke-width="2.4" stroke-linejoin="round" stroke-linecap="round"/></g><path d="M711.5 654.6V647.0M778.6 654.6V647.0M845.7 654.6V647.0M912.7 654.6V647.0M979.8 654.6V647.0M1046.9 654.6V647.0M1114.0 654.6V647.0M1181.1 654.6V647.0M698.1 654.6V650.4M724.9 654.6V650.4M738.3 654.6V650.4M751.7 654.6V650.4M765.2 654.6V650.4M792.0 654.6V650.4M805.4 654.6V650.4M818.8 654.6V650.4M832.2 654.6V650.4M859.1 654.6V650.4M872.5 654.6V650.4M885.9 654.6V650.4M899.3 654.6V650.4M926.2 654.6V650.4M939.6 654.6V650.4M953.0 654.6V650.4M966.4 654.6V650.4M993.2 654.6V650.4M1006.7 654.6V650.4M1020.1 654.6V650.4M1033.5 654.6V650.4M1060.3 654.6V650.4M1073.7 654.6V650.4M1087.1 654.6V650.4M1100.6 654.6V650.4M1127.4 654.6V650.4M1140.8 654.6V650.4M1154.2 654.6V650.4M1167.6 654.6V650.4M687.7 137.4H695.3M687.7 244.7H695.3M687.7 352.0H695.3M687.7 459.3H695.3M687.7 566.7H695.3M687.7 158.9H691.9M687.7 180.3H691.9M687.7 201.8H691.9M687.7 223.2H691.9M687.7 266.2H691.9M687.7 287.6H691.9M687.7 309.1H691.9M687.7 330.5H691.9M687.7 373.5H691.9M687.7 394.9H691.9M687.7 416.4H691.9M687.7 437.8H691.9M687.7 480.8H691.9M687.7 502.2H691.9M687.7 523.7H691.9M687.7 545.1H691.9M687.7 588.1H691.9M687.7 609.5H691.9M687.7 631.0H691.9" stroke="#111" stroke-width="1.2" fill="none"/><path d="M687.7 120.5H1186.6" stroke="#111" stroke-width="1.5"/><path d="M1186.6 120.5V654.6" stroke="#111" stroke-width="1.1"/><path d="M687.7 119.8V655.9" stroke="#111" stroke-width="1.45"/><path d="M686.9 654.6H1187.1" stroke="#2e2e2e" stroke-width="2.5"/><text transform="translate(697.7 245.2) scale(1 1.185)" y="4.25" text-anchor="start" font-size="11.8" fill="#2c2c2c" >-20</text><text transform="translate(697.7 352.5) scale(1 1.185)" y="4.25" text-anchor="start" font-size="11.8" fill="#2c2c2c" >-30</text><text transform="translate(697.7 459.8) scale(1 1.185)" y="4.25" text-anchor="start" font-size="11.8" fill="#2c2c2c" >-40</text><text transform="translate(697.7 567.2) scale(1 1.185)" y="4.25" text-anchor="start" font-size="11.8" fill="#2c2c2c" >-50</text><text transform="translate(778.6 642.0) scale(1 1.185)" y="4.25" text-anchor="middle" font-size="11.8" fill="#2c2c2c" >0.01</text><text transform="translate(845.7 642.0) scale(1 1.185)" y="4.25" text-anchor="middle" font-size="11.8" fill="#2c2c2c" >0.02</text><text transform="translate(912.7 642.0) scale(1 1.185)" y="4.25" text-anchor="middle" font-size="11.8" fill="#2c2c2c" >0.03</text><text transform="translate(979.8 642.0) scale(1 1.185)" y="4.25" text-anchor="middle" font-size="11.8" fill="#2c2c2c" >0.04</text><text transform="translate(1046.9 642.0) scale(1 1.185)" y="4.25" text-anchor="middle" font-size="11.8" fill="#2c2c2c" >0.05</text><text transform="translate(1114.0 642.0) scale(1 1.185)" y="4.25" text-anchor="middle" font-size="11.8" fill="#2c2c2c" >0.06</text><text transform="translate(703.9 129.3) scale(1 1.185)" y="4.25" text-anchor="start" font-size="11.8" fill="#2c2c2c" >Magnitude [dB]</text><text transform="translate(937.1 129.3) scale(1 1.185)" y="4.25" text-anchor="middle" font-size="11.8" fill="#2c2c2c" >[0.01GHz/div]</text><text transform="translate(1182.1 624.3) scale(1 1.185)" y="4.25" text-anchor="end" font-size="11.8" fill="#2c2c2c" >f [GHz]</text><text transform="translate(717.2 147.9) rotate(90)" font-size="14" font-weight="bold" fill="#ff2c2c" textLength="37" lengthAdjust="spacingAndGlyphs">Limit</text><path d="M1190.1 130.1H1289.9" stroke="#0000ff" stroke-width="3.7"/><rect x="1204.2" y="121.4" width="72" height="20.5" rx="9" ry="9.5" fill="#f5f5f5" stroke="#0000ff" stroke-width="3.4"/><text transform="translate(1240.6 131.8) scale(1 1.185)" y="3.33" text-anchor="middle" font-size="9.25" fill="#2c2c2c" >SDD11</text><path d="M1190.1 158.8H1289.9" stroke="#1a1a1a" stroke-width="3.7"/><rect x="1204.2" y="150.2" width="72" height="20.5" rx="9" ry="9.5" fill="#f5f5f5" stroke="#1a1a1a" stroke-width="3.4"/><text transform="translate(1240.6 160.6) scale(1 1.185)" y="3.33" text-anchor="middle" font-size="9.25" fill="#2c2c2c" >SDD22</text><rect x="1188.2" y="118.3" width="104.4" height="537.5" fill="none" stroke="#444" stroke-width="1" stroke-dasharray="1.3 1.3"/></svg></div><div class="panel" style="left:1300.2px;top:52.3px;width:613.4px;height:607.3px"><div class="ptitle grn"><div class="t">Diagram 2</div><svg class="abs" style="left:70.7px;top:9px" width="484.7" height="8" viewBox="0 0 484.7 8"><defs><pattern id="gp6" width="4" height="4.4" patternUnits="userSpaceOnUse"><rect x="0" y="0.6" width="1.2" height="1.2" fill="#9aa0a8"/><rect x="2" y="2.8" width="1.2" height="1.2" fill="#9aa0a8"/></pattern></defs><rect width="484.7" height="7.2" fill="url(#gp6)"/></svg><svg class="abs" style="left:555.8px;top:0" width="56" height="25" viewBox="0 0 56 25"><path d="M5.6 9.3 L14.2 9.3 L9.9 14.3 Z" fill="#1a1a1a"/><path d="M24.6 6.6 H30.2 V13.6 H24.6 Z" fill="none" stroke="#1a1a1a" stroke-width="1.1"/><path d="M29.3 6.6 V13.6" stroke="#1a1a1a" stroke-width="1.8"/><path d="M23.4 13.8 H31.6 M27.4 14 V18.8" stroke="#1a1a1a" stroke-width="1.2"/><path d="M39 7.6 L48.2 16.8 M48.2 7.6 L39 16.8" stroke="#1a1a1a" stroke-width="1.5"/></svg></div><div class="abs" style="left:0;top:25px;width:613.4px;height:39.3px;background:#ebf3fd"></div><svg class="abs" style="left:-1px;top:-1px" width="613.4" height="607.3" viewBox="1300.2 52.3 613.4 607.3" font-family="Liberation Sans, sans-serif"><defs><radialGradient id="lens2" cx="0.35" cy="0.3" r="0.8"><stop offset="0" stop-color="#f4f4f4"/><stop offset="1" stop-color="#cfd2d6"/></radialGradient></defs><g transform="translate(620 0)"><rect x="687.2" y="84.2" width="1.8" height="1.8" fill="#5a5a5a"/><rect x="687.2" y="88.9" width="1.8" height="1.8" fill="#5a5a5a"/><rect x="687.2" y="93.3" width="1.8" height="1.8" fill="#5a5a5a"/><rect x="687.2" y="97.7" width="1.8" height="1.8" fill="#5a5a5a"/><rect x="687.2" y="102.1" width="1.8" height="1.8" fill="#5a5a5a"/><rect x="687.2" y="106.9" width="1.8" height="1.8" fill="#5a5a5a"/><rect x="695" y="86.8" width="22" height="18.8" rx="1.8" fill="#eef4fc" stroke="#3b4a5c" stroke-width="1.7"/><rect x="694.4" y="103" width="23.2" height="3.4" rx="1" fill="#3b4a5c"/><rect x="701.3" y="107.6" width="9.4" height="1.7" rx="0.8" fill="#3b4a5c"/><path d="M706.3 89.4 L708.9 92.6 H707 V99 H708.9 L706.3 102 L703.7 99 H705.6 V92.6 H703.7 Z" fill="#3b4a5c"/><path d="M698.2 95.8 L701.6 92.9 V95 H704.2 V96.6 H701.6 V98.7 Z M714.3 95.8 L710.9 92.9 V95 H708.3 V96.6 H710.9 V98.7 Z" fill="#3b4a5c"/><path d="M737.5 99.4 L743.6 109.8" stroke="#3c3c3c" stroke-width="2.4" stroke-linecap="round"/><path d="M737.1 98.6 L739.3 102.2" stroke="#9aa" stroke-width="2"/><ellipse cx="734.1" cy="91.8" rx="6.7" ry="7.1" fill="url(#lens2)" stroke="#7a92bb" stroke-width="1.2" stroke-dasharray="1.5 0.8"/><path d="M767.6 99.4 L773.7 109.8" stroke="#3c3c3c" stroke-width="2.4" stroke-linecap="round"/><path d="M767.2 98.6 L769.4 102.2" stroke="#9aa" stroke-width="2"/><ellipse cx="764.2" cy="91.8" rx="6.7" ry="7.1" fill="url(#lens2)" stroke="#7a92bb" stroke-width="1.2" stroke-dasharray="1.5 0.8"/><path d="M797.4 99.4 L803.5 109.8" stroke="#3c3c3c" stroke-width="2.4" stroke-linecap="round"/><path d="M797.0 98.6 L799.2 102.2" stroke="#9aa" stroke-width="2"/><ellipse cx="794.0" cy="91.8" rx="6.7" ry="7.1" fill="url(#lens2)" stroke="#7a92bb" stroke-width="1.2" stroke-dasharray="1.5 0.8"/><path d="M725.4 105.4 H734.4 M729.9 100.8 V109.9" stroke="#444" stroke-width="2"/><path d="M755.4 105.4 H762.9" stroke="#444" stroke-width="2"/><text x="784.6" y="96.3" font-size="10.6" fill="#111" textLength="22.4" lengthAdjust="spacingAndGlyphs">Auto</text><path d="M816.5 81.2 V114.5 M857.4 81.2 V114.5" stroke="#b5bcc8" stroke-width="1"/><rect x="827" y="87.4" width="19.9" height="21.6" rx="3" fill="#fff" stroke="#444" stroke-width="1.7"/><path d="M827.5 89 H846.5" stroke="#444" stroke-width="1.6"/><path d="M829.2 90.5 H831.6 M833.4 90.5 H838.4 M840 90.5 H845" stroke="#333" stroke-width="1.5"/><path d="M829.2 94.6 H831.6 M833.4 94.6 H838.4 M840 94.6 H845" stroke="#8a8a8a" stroke-width="1.5"/><path d="M829.2 97.6 H831.6 M833.4 97.6 H838.4 M840 97.6 H845" stroke="#444" stroke-width="1.5"/><path d="M829.2 100.4 H831.6 M833.4 100.4 H838.4 M840 100.4 H845" stroke="#333" stroke-width="1.5"/><path d="M829.2 103 H831.6 M833.4 103 H838.4 M840 103 H845" stroke="#8a8a8a" stroke-width="1.5"/><path d="M829.2 105.9 H831.6 M833.4 105.9 H838.4 M840 105.9 H845" stroke="#8a8a8a" stroke-width="1.5"/><rect x="863.9" y="82.1" width="28.1" height="30.9" fill="#b5d9ff"/><rect x="866.3" y="84.5" width="23.4" height="26.2" fill="#fff" stroke="#b4b4b4" stroke-width="1"/><path d="M868 91.5 H888 M868 96.2 H888 M868 100.5 H888 M868 105.1 H888 M870.5 86 V109.5 M875.6 86 V109.5 M880.6 86 V109.5 M885.5 86 V109.5" stroke="#e3e3e3" stroke-width="1"/><path d="M873.3 87 V93.8 H882.7 V87 M873.3 108.6 V102.5 H882.7 V108.6" fill="none" stroke="#111" stroke-width="1.3"/><rect x="903" y="84.8" width="99.6" height="25.7" fill="#fff"/><rect x="990.8" y="85.6" width="10.8" height="24" fill="#e9f0fa"/><path d="M993.3 96 H1000.1 L996.7 99.6 Z" fill="#111"/><path d="M1017.6 106.6 H1023.2" stroke="#777" stroke-width="1.1"/><path d="M1017.8 109 H1023 L1020.4 112.8 Z" fill="#777"/></g><clipPath id="cc2"><rect x="1522.2" y="84.1" width="87.6" height="25.7"/></clipPath><g clip-path="url(#cc2)"><text transform="translate(1525.4 98.3) scale(0.9 1.185)" y="4.25" text-anchor="start" font-size="11.8" fill="#2c2c2c" >SDD21 (IL)</text></g><defs><clipPath id="cp2"><rect x="1308.5" y="121.2" width="497.8" height="532.1"/></clipPath></defs><rect x="1307.7" y="120.5" width="499.1" height="534.1" fill="#fff"/><g clip-path="url(#cp2)"><path d="M1310.6 121.2V653.4M1324.1 121.2V653.4M1351.1 121.2V653.4M1364.6 121.2V653.4M1378.0 121.2V653.4M1391.5 121.2V653.4M1418.5 121.2V653.4M1431.9 121.2V653.4M1445.4 121.2V653.4M1458.9 121.2V653.4M1485.8 121.2V653.4M1499.3 121.2V653.4M1512.8 121.2V653.4M1526.3 121.2V653.4M1553.2 121.2V653.4M1566.7 121.2V653.4M1580.2 121.2V653.4M1593.6 121.2V653.4M1620.6 121.2V653.4M1634.1 121.2V653.4M1647.5 121.2V653.4M1661.0 121.2V653.4M1688.0 121.2V653.4M1701.5 121.2V653.4M1714.9 121.2V653.4M1728.4 121.2V653.4M1755.4 121.2V653.4M1768.8 121.2V653.4M1782.3 121.2V653.4M1795.8 121.2V653.4" stroke="#e6e6e6" stroke-width="0.9" stroke-dasharray="10 1.5" fill="none"/><path d="M1308.5 140.9H1806.3M1308.5 182.9H1806.3M1308.5 204.0H1806.3M1308.5 225.0H1806.3M1308.5 267.1H1806.3M1308.5 288.1H1806.3M1308.5 309.1H1806.3M1308.5 351.2H1806.3M1308.5 372.2H1806.3M1308.5 393.3H1806.3M1308.5 435.4H1806.3M1308.5 456.4H1806.3M1308.5 477.4H1806.3M1308.5 519.5H1806.3M1308.5 540.5H1806.3M1308.5 561.6H1806.3M1308.5 603.6H1806.3M1308.5 624.7H1806.3M1308.5 645.7H1806.3" stroke="#e5e5e5" stroke-width="0.95" stroke-dasharray="3.4 1.6" fill="none"/><path d="M1337.6 121.2V653.4M1405.0 121.2V653.4M1472.4 121.2V653.4M1539.7 121.2V653.4M1607.1 121.2V653.4M1674.5 121.2V653.4M1741.9 121.2V653.4" stroke="#b2b2b2" stroke-width="0.9" stroke-dasharray="9 2" fill="none"/><path d="M1308.5 161.9H1806.3M1308.5 246.0H1806.3M1308.5 330.2H1806.3M1308.5 414.3H1806.3M1308.5 498.5H1806.3M1308.5 582.6H1806.3" stroke="#bcbcbc" stroke-width="1.5" stroke-dasharray="3.4 1.6" fill="none"/><path d="M1741.1 170.7 A11.3 11.3 0 0 0 1760.1 170.7" fill="none" stroke="#7abd28" stroke-opacity="1" stroke-width="3.0" stroke-linecap="round"/><path d="M1734.9 170.7 A17.9 17.9 0 0 0 1766.3 170.7" fill="none" stroke="#c6dba0" stroke-opacity="1" stroke-width="2.1" stroke-linecap="round"/><path d="M1729.2 170.7 A24.5 24.5 0 0 0 1772.0 170.7" fill="none" stroke="#e0eacc" stroke-opacity="1" stroke-width="1.7" stroke-linecap="round"/><text x="1717.2" y="166.9" font-size="25.4" fill="#777" stroke="#777" stroke-width="0.55" textLength="78.5" lengthAdjust="spacingAndGlyphs">SEQUID</text><polygon points="1338.2,371.8 1472.5,371.8 1781.8,582.2 1781.8,657.6 1338.2,657.6" fill="#ff0000" fill-opacity="0.15" stroke="#ff8888" stroke-width="1.5"/><path d="M1344.5 202.0C1345.2 204.2 1347.2 211.2 1348.8 215.0C1350.3 218.8 1351.9 222.1 1353.8 225.0C1355.7 227.9 1357.9 229.2 1360.0 232.5C1362.1 235.8 1364.2 241.0 1366.3 245.0C1368.4 249.0 1370.4 253.4 1372.5 256.3C1374.6 259.2 1376.3 259.8 1378.8 262.5C1381.3 265.2 1384.6 269.4 1387.5 272.5C1390.4 275.6 1393.4 277.8 1396.3 281.3C1399.2 284.9 1402.1 290.1 1405.0 293.8C1407.9 297.6 1411.1 301.3 1413.8 303.8C1416.5 306.3 1419.0 307.6 1421.3 308.8C1423.6 310.1 1425.4 309.4 1427.5 311.3C1429.6 313.2 1431.7 317.7 1433.8 320.0C1435.9 322.3 1437.9 323.8 1440.0 325.0C1442.1 326.2 1444.2 325.8 1446.3 327.5C1448.4 329.2 1450.2 332.3 1452.5 335.0C1454.8 337.7 1457.5 341.3 1460.0 343.8C1462.5 346.3 1465.2 347.7 1467.5 350.0C1469.8 352.3 1472.0 355.8 1473.8 357.5C1475.5 359.2 1476.5 360.2 1478.0 360.0C1479.5 359.8 1481.1 356.9 1482.5 356.3C1483.9 355.7 1484.8 355.1 1486.3 356.3C1487.8 357.6 1489.4 361.7 1491.3 363.8C1493.2 365.9 1495.4 367.6 1497.5 368.8C1499.6 370.1 1501.9 369.6 1503.8 371.3C1505.7 373.0 1506.9 377.8 1508.8 378.8C1510.7 379.8 1513.1 377.9 1515.0 377.5C1516.9 377.1 1518.4 376.0 1520.0 376.5C1521.6 377.0 1523.1 378.0 1524.7 380.6C1526.3 383.2 1527.9 388.4 1529.4 391.9C1531.0 395.3 1532.6 399.3 1534.0 401.3C1535.4 403.3 1536.4 404.1 1537.8 404.0C1539.2 403.9 1540.8 401.7 1542.5 400.9C1544.2 400.1 1546.0 399.2 1548.0 399.0C1550.0 398.8 1552.7 398.8 1554.7 399.8C1556.8 400.8 1558.4 403.4 1560.3 405.0C1562.2 406.6 1564.3 409.4 1566.0 409.7C1567.7 410.0 1568.9 407.9 1570.6 406.9C1572.2 405.9 1574.3 403.5 1575.9 403.5C1577.5 403.5 1578.5 405.7 1580.0 406.9C1581.5 408.1 1583.1 409.7 1584.7 410.6C1586.3 411.5 1587.9 410.2 1589.4 412.1C1591.0 414.0 1592.4 418.2 1594.0 421.9C1595.6 425.5 1597.4 432.4 1598.8 434.0C1600.2 435.6 1601.4 433.3 1602.5 431.3C1603.6 429.3 1604.3 424.4 1605.3 421.9C1606.3 419.4 1607.4 416.0 1608.5 416.3C1609.6 416.6 1610.9 420.4 1611.9 423.8C1612.9 427.2 1613.8 434.1 1614.7 436.9C1615.6 439.6 1616.6 440.6 1617.5 440.3C1618.4 440.0 1618.9 437.3 1620.3 435.0C1621.7 432.7 1624.3 427.1 1626.0 426.6C1627.7 426.1 1629.0 430.2 1630.6 432.2C1632.1 434.2 1633.6 437.6 1635.3 438.8C1637.0 440.1 1639.1 438.9 1641.0 439.7C1642.9 440.5 1644.9 442.2 1646.6 443.4C1648.3 444.5 1649.6 445.9 1651.3 446.6C1653.0 447.3 1655.0 446.6 1656.9 447.8C1658.8 449.0 1660.6 450.9 1662.5 453.8C1664.4 456.7 1666.4 461.6 1668.1 465.0C1669.8 468.4 1671.4 472.4 1672.8 474.0C1674.2 475.6 1675.2 475.6 1676.6 474.4C1678.0 473.2 1679.4 469.5 1681.3 466.9C1683.2 464.3 1686.1 459.1 1687.8 458.8C1689.5 458.5 1690.3 461.1 1691.6 465.0C1692.8 468.9 1694.1 476.6 1695.3 481.9C1696.5 487.2 1697.8 493.6 1699.0 496.9C1700.2 500.2 1701.4 500.8 1702.8 501.6C1704.2 502.4 1705.8 501.3 1707.5 501.6C1709.2 501.9 1711.2 503.9 1713.1 503.4C1715.0 502.9 1717.1 500.1 1718.8 498.8C1720.5 497.5 1721.9 495.2 1723.4 495.4C1725.0 495.5 1726.7 498.5 1728.1 499.7C1729.5 500.9 1730.3 502.6 1731.9 502.5C1733.5 502.4 1735.9 498.8 1737.5 498.8C1739.1 498.8 1740.2 500.3 1741.3 502.5C1742.4 504.7 1743.1 509.7 1744.0 511.9C1744.9 514.1 1746.0 515.9 1746.9 515.6C1747.9 515.3 1748.8 513.4 1749.7 510.0C1750.6 506.6 1751.6 499.4 1752.5 495.0C1753.4 490.6 1754.5 486.1 1755.3 483.8C1756.1 481.6 1756.4 480.9 1757.2 481.5C1758.0 482.1 1759.1 484.6 1760.0 487.5C1760.9 490.4 1761.9 496.1 1762.8 498.8C1763.7 501.6 1764.3 503.2 1765.6 504.0C1766.8 504.8 1769.0 502.7 1770.3 503.4C1771.5 504.1 1772.0 505.1 1773.1 508.1C1774.2 511.1 1775.7 517.4 1776.9 521.3C1778.1 525.2 1779.7 529.9 1780.3 531.6" fill="none" stroke="#8000ff" stroke-width="2.4" stroke-linejoin="round" stroke-linecap="round"/><path d="M1344.5 203.0C1345.4 205.8 1347.8 214.7 1350.0 220.0C1352.2 225.3 1355.0 230.2 1357.5 235.0C1360.0 239.8 1362.5 244.8 1365.0 248.8C1367.5 252.8 1370.0 255.5 1372.5 258.8C1375.0 262.1 1377.3 265.5 1380.0 268.8C1382.7 272.1 1385.9 275.3 1388.8 278.8C1391.7 282.3 1394.8 287.1 1397.5 290.0C1400.2 292.9 1402.7 295.1 1405.0 296.3C1407.3 297.5 1409.2 295.8 1411.3 297.0C1413.4 298.2 1415.4 301.0 1417.5 303.8C1419.6 306.6 1421.7 310.9 1423.8 313.8C1425.9 316.7 1427.9 319.5 1430.0 321.3C1432.1 323.1 1434.0 323.7 1436.3 324.5C1438.6 325.3 1441.5 325.0 1443.8 326.3C1446.1 327.6 1447.7 329.8 1450.0 332.5C1452.3 335.2 1455.2 340.0 1457.5 342.5C1459.8 345.0 1461.5 346.0 1463.8 347.5C1466.1 349.0 1469.0 349.8 1471.3 351.3C1473.6 352.8 1475.4 354.4 1477.5 356.3C1479.6 358.2 1481.9 361.9 1483.8 362.5C1485.7 363.1 1487.3 361.2 1488.8 360.0C1490.2 358.8 1491.2 354.6 1492.5 355.0C1493.8 355.4 1494.8 359.2 1496.3 362.5C1497.8 365.8 1499.6 372.2 1501.3 375.0C1503.0 377.8 1504.4 379.0 1506.3 379.5C1508.2 380.0 1510.6 377.3 1512.5 378.0C1514.4 378.7 1516.2 382.1 1517.5 383.8C1518.8 385.5 1519.0 386.6 1520.0 388.1C1521.0 389.6 1522.4 391.7 1523.8 392.8C1525.2 393.9 1526.9 394.7 1528.4 394.7C1530.0 394.7 1531.7 392.3 1533.1 392.8C1534.5 393.3 1535.7 395.3 1536.9 397.5C1538.2 399.7 1539.3 403.8 1540.6 405.9C1541.8 408.0 1543.0 410.1 1544.4 410.3C1545.8 410.5 1547.3 408.4 1549.0 406.9C1550.7 405.4 1553.0 401.8 1554.7 401.3C1556.4 400.8 1557.7 402.5 1559.4 404.0C1561.1 405.5 1563.3 409.0 1565.0 410.3C1566.7 411.6 1568.1 411.6 1569.7 411.6C1571.3 411.7 1572.9 409.5 1574.4 410.6C1576.0 411.7 1577.4 415.5 1579.0 418.1C1580.6 420.7 1582.2 424.9 1583.8 426.0C1585.4 427.1 1587.0 424.9 1588.4 424.7C1589.8 424.5 1590.8 423.6 1592.2 424.7C1593.6 425.8 1595.3 429.1 1596.9 431.3C1598.5 433.5 1600.0 436.4 1601.6 437.8C1603.2 439.2 1604.8 440.2 1606.3 439.7C1607.8 439.2 1609.4 436.6 1610.9 435.0C1612.5 433.4 1614.2 430.1 1615.6 429.8C1617.0 429.5 1618.2 430.7 1619.4 433.1C1620.7 435.5 1621.8 441.5 1623.1 444.4C1624.3 447.3 1625.3 449.6 1626.9 450.4C1628.5 451.2 1630.8 448.8 1632.5 449.0C1634.2 449.2 1635.6 451.0 1637.2 451.9C1638.8 452.8 1640.2 454.2 1641.9 454.3C1643.6 454.4 1645.8 452.7 1647.5 452.3C1649.2 451.9 1650.5 451.2 1652.2 451.9C1653.9 452.6 1655.9 455.0 1657.8 456.6C1659.7 458.2 1661.5 460.8 1663.4 461.8C1665.3 462.8 1667.4 462.1 1669.1 462.6C1670.8 463.1 1672.4 462.7 1673.8 465.0C1675.2 467.3 1676.2 472.9 1677.5 476.3C1678.8 479.7 1680.0 483.7 1681.3 485.6C1682.5 487.5 1683.6 488.2 1685.0 487.9C1686.4 487.6 1688.0 485.6 1689.7 483.8C1691.4 482.0 1693.6 479.4 1695.3 477.2C1697.0 475.0 1698.4 472.4 1700.0 470.6C1701.6 468.8 1703.3 466.5 1704.7 466.5C1706.1 466.5 1707.2 467.4 1708.4 470.6C1709.7 473.8 1710.9 481.5 1712.2 485.6C1713.5 489.7 1714.8 494.1 1716.0 495.0C1717.2 495.9 1718.5 493.0 1719.7 491.3C1720.9 489.6 1722.3 486.1 1723.4 484.7C1724.5 483.3 1725.0 482.6 1726.3 482.8C1727.6 483.0 1729.5 484.2 1731.0 485.6C1732.5 487.0 1733.9 489.8 1735.6 491.3C1737.3 492.8 1739.6 493.9 1741.3 494.6C1743.0 495.3 1744.6 494.7 1746.0 495.4C1747.4 496.1 1748.5 496.7 1749.7 498.8C1750.9 500.9 1752.2 504.7 1753.4 508.1C1754.7 511.5 1756.1 515.8 1757.2 519.4C1758.3 523.0 1759.1 527.3 1760.0 529.7C1760.9 532.1 1761.9 534.1 1762.8 534.0C1763.7 533.9 1764.7 532.2 1765.6 528.8C1766.5 525.4 1767.5 518.6 1768.4 513.8C1769.4 508.9 1770.5 502.4 1771.3 499.7C1772.1 497.0 1772.3 496.7 1773.1 497.8C1773.9 498.9 1775.0 502.7 1775.9 506.3C1776.9 509.9 1777.9 515.6 1778.8 519.4C1779.7 523.1 1780.8 527.2 1781.2 528.8" fill="none" stroke="#ff00e6" stroke-width="2.4" stroke-linejoin="round" stroke-linecap="round"/></g><path d="M1337.6 654.6V647.0M1405.0 654.6V647.0M1472.4 654.6V647.0M1539.7 654.6V647.0M1607.1 654.6V647.0M1674.5 654.6V647.0M1741.9 654.6V647.0M1310.6 654.6V650.4M1324.1 654.6V650.4M1351.1 654.6V650.4M1364.6 654.6V650.4M1378.0 654.6V650.4M1391.5 654.6V650.4M1418.5 654.6V650.4M1431.9 654.6V650.4M1445.4 654.6V650.4M1458.9 654.6V650.4M1485.8 654.6V650.4M1499.3 654.6V650.4M1512.8 654.6V650.4M1526.3 654.6V650.4M1553.2 654.6V650.4M1566.7 654.6V650.4M1580.2 654.6V650.4M1593.6 654.6V650.4M1620.6 654.6V650.4M1634.1 654.6V650.4M1647.5 654.6V650.4M1661.0 654.6V650.4M1688.0 654.6V650.4M1701.5 654.6V650.4M1714.9 654.6V650.4M1728.4 654.6V650.4M1755.4 654.6V650.4M1768.8 654.6V650.4M1782.3 654.6V650.4M1795.8 654.6V650.4M1307.7 161.9H1315.3M1307.7 246.0H1315.3M1307.7 330.2H1315.3M1307.7 414.3H1315.3M1307.7 498.5H1315.3M1307.7 582.6H1315.3M1307.7 140.9H1311.9M1307.7 182.9H1311.9M1307.7 204.0H1311.9M1307.7 225.0H1311.9M1307.7 267.1H1311.9M1307.7 288.1H1311.9M1307.7 309.1H1311.9M1307.7 351.2H1311.9M1307.7 372.2H1311.9M1307.7 393.3H1311.9M1307.7 435.4H1311.9M1307.7 456.4H1311.9M1307.7 477.4H1311.9M1307.7 519.5H1311.9M1307.7 540.5H1311.9M1307.7 561.6H1311.9M1307.7 603.6H1311.9M1307.7 624.7H1311.9M1307.7 645.7H1311.9" stroke="#111" stroke-width="1.2" fill="none"/><path d="M1307.7 120.5H1806.8" stroke="#111" stroke-width="1.5"/><path d="M1806.8 120.5V654.6" stroke="#111" stroke-width="1.1"/><path d="M1307.7 119.8V655.9" stroke="#111" stroke-width="1.45"/><path d="M1306.9 654.6H1807.3" stroke="#2e2e2e" stroke-width="2.5"/><text transform="translate(1317.7 162.4) scale(1 1.185)" y="4.25" text-anchor="start" font-size="11.8" fill="#2c2c2c" >0</text><text transform="translate(1317.7 246.5) scale(1 1.185)" y="4.25" text-anchor="start" font-size="11.8" fill="#2c2c2c" >-0.2</text><text transform="translate(1317.7 330.7) scale(1 1.185)" y="4.25" text-anchor="start" font-size="11.8" fill="#2c2c2c" >-0.4</text><text transform="translate(1317.7 414.8) scale(1 1.185)" y="4.25" text-anchor="start" font-size="11.8" fill="#2c2c2c" >-0.6</text><text transform="translate(1317.7 499.0) scale(1 1.185)" y="4.25" text-anchor="start" font-size="11.8" fill="#2c2c2c" >-0.8</text><text transform="translate(1317.7 583.1) scale(1 1.185)" y="4.25" text-anchor="start" font-size="11.8" fill="#2c2c2c" >-1</text><text transform="translate(1337.6 642.0) scale(1 1.185)" y="4.25" text-anchor="middle" font-size="11.8" fill="#2c2c2c" >0</text><text transform="translate(1405.0 642.0) scale(1 1.185)" y="4.25" text-anchor="middle" font-size="11.8" fill="#2c2c2c" >0.01</text><text transform="translate(1472.4 642.0) scale(1 1.185)" y="4.25" text-anchor="middle" font-size="11.8" fill="#2c2c2c" >0.02</text><text transform="translate(1539.7 642.0) scale(1 1.185)" y="4.25" text-anchor="middle" font-size="11.8" fill="#2c2c2c" >0.03</text><text transform="translate(1607.1 642.0) scale(1 1.185)" y="4.25" text-anchor="middle" font-size="11.8" fill="#2c2c2c" >0.04</text><text transform="translate(1674.5 642.0) scale(1 1.185)" y="4.25" text-anchor="middle" font-size="11.8" fill="#2c2c2c" >0.05</text><text transform="translate(1741.9 642.0) scale(1 1.185)" y="4.25" text-anchor="middle" font-size="11.8" fill="#2c2c2c" >0.06</text><text transform="translate(1323.9 129.3) scale(1 1.185)" y="4.25" text-anchor="start" font-size="11.8" fill="#2c2c2c" >Magnitude [dB]</text><text transform="translate(1557.2 129.3) scale(1 1.185)" y="4.25" text-anchor="middle" font-size="11.8" fill="#2c2c2c" >[0.01GHz/div]</text><text transform="translate(1802.3 624.3) scale(1 1.185)" y="4.25" text-anchor="end" font-size="11.8" fill="#2c2c2c" >f [GHz]</text><path d="M1810.3 130.1H1910.1" stroke="#8000ff" stroke-width="3.7"/><rect x="1824.4" y="121.4" width="72" height="20.5" rx="9" ry="9.5" fill="#f5f5f5" stroke="#8000ff" stroke-width="3.4"/><text transform="translate(1860.8 131.8) scale(1 1.185)" y="3.33" text-anchor="middle" font-size="9.25" fill="#2c2c2c" >SDD12</text><path d="M1810.3 158.8H1910.1" stroke="#ff00e6" stroke-width="3.7"/><rect x="1824.4" y="150.2" width="72" height="20.5" rx="9" ry="9.5" fill="#f5f5f5" stroke="#ff00e6" stroke-width="3.4"/><text transform="translate(1860.8 160.6) scale(1 1.185)" y="3.33" text-anchor="middle" font-size="9.25" fill="#2c2c2c" >SDD21</text></svg></div><div class="panel" style="left:680.3px;top:666.8px;width:613.6px;height:606.2px"><div class="ptitle grn"><div class="t">Diagram 3</div><svg class="abs" style="left:70.7px;top:9px" width="484.90000000000003" height="8" viewBox="0 0 484.90000000000003 8"><defs><pattern id="gp7" width="4" height="4.4" patternUnits="userSpaceOnUse"><rect x="0" y="0.6" width="1.2" height="1.2" fill="#9aa0a8"/><rect x="2" y="2.8" width="1.2" height="1.2" fill="#9aa0a8"/></pattern></defs><rect width="484.90000000000003" height="7.2" fill="url(#gp7)"/></svg><svg class="abs" style="left:556.0px;top:0" width="56" height="25" viewBox="0 0 56 25"><path d="M5.6 9.3 L14.2 9.3 L9.9 14.3 Z" fill="#1a1a1a"/><path d="M24.6 6.6 H30.2 V13.6 H24.6 Z" fill="none" stroke="#1a1a1a" stroke-width="1.1"/><path d="M29.3 6.6 V13.6" stroke="#1a1a1a" stroke-width="1.8"/><path d="M23.4 13.8 H31.6 M27.4 14 V18.8" stroke="#1a1a1a" stroke-width="1.2"/><path d="M39 7.6 L48.2 16.8 M48.2 7.6 L39 16.8" stroke="#1a1a1a" stroke-width="1.5"/></svg></div><div class="abs" style="left:0;top:25px;width:613.6px;height:39.2px;background:#ebf3fd"></div><svg class="abs" style="left:-1px;top:-1px" width="613.6" height="606.2" viewBox="680.3 666.8 613.6 606.2" font-family="Liberation Sans, sans-serif"><defs><radialGradient id="lens3" cx="0.35" cy="0.3" r="0.8"><stop offset="0" stop-color="#f4f4f4"/><stop offset="1" stop-color="#cfd2d6"/></radialGradient></defs><g transform="translate(0 614.4)"><rect x="687.2" y="84.2" width="1.8" height="1.8" fill="#5a5a5a"/><rect x="687.2" y="88.9" width="1.8" height="1.8" fill="#5a5a5a"/><rect x="687.2" y="93.3" width="1.8" height="1.8" fill="#5a5a5a"/><rect x="687.2" y="97.7" width="1.8" height="1.8" fill="#5a5a5a"/><rect x="687.2" y="102.1" width="1.8" height="1.8" fill="#5a5a5a"/><rect x="687.2" y="106.9" width="1.8" height="1.8" fill="#5a5a5a"/><rect x="695" y="86.8" width="22" height="18.8" rx="1.8" fill="#eef4fc" stroke="#3b4a5c" stroke-width="1.7"/><rect x="694.4" y="103" width="23.2" height="3.4" rx="1" fill="#3b4a5c"/><rect x="701.3" y="107.6" width="9.4" height="1.7" rx="0.8" fill="#3b4a5c"/><path d="M706.3 89.4 L708.9 92.6 H707 V99 H708.9 L706.3 102 L703.7 99 H705.6 V92.6 H703.7 Z" fill="#3b4a5c"/><path d="M698.2 95.8 L701.6 92.9 V95 H704.2 V96.6 H701.6 V98.7 Z M714.3 95.8 L710.9 92.9 V95 H708.3 V96.6 H710.9 V98.7 Z" fill="#3b4a5c"/><path d="M737.5 99.4 L743.6 109.8" stroke="#3c3c3c" stroke-width="2.4" stroke-linecap="round"/><path d="M737.1 98.6 L739.3 102.2" stroke="#9aa" stroke-width="2"/><ellipse cx="734.1" cy="91.8" rx="6.7" ry="7.1" fill="url(#lens3)" stroke="#7a92bb" stroke-width="1.2" stroke-dasharray="1.5 0.8"/><path d="M767.6 99.4 L773.7 109.8" stroke="#3c3c3c" stroke-width="2.4" stroke-linecap="round"/><path d="M767.2 98.6 L769.4 102.2" stroke="#9aa" stroke-width="2"/><ellipse cx="764.2" cy="91.8" rx="6.7" ry="7.1" fill="url(#lens3)" stroke="#7a92bb" stroke-width="1.2" stroke-dasharray="1.5 0.8"/><path d="M797.4 99.4 L803.5 109.8" stroke="#3c3c3c" stroke-width="2.4" stroke-linecap="round"/><path d="M797.0 98.6 L799.2 102.2" stroke="#9aa" stroke-width="2"/><ellipse cx="794.0" cy="91.8" rx="6.7" ry="7.1" fill="url(#lens3)" stroke="#7a92bb" stroke-width="1.2" stroke-dasharray="1.5 0.8"/><path d="M725.4 105.4 H734.4 M729.9 100.8 V109.9" stroke="#444" stroke-width="2"/><path d="M755.4 105.4 H762.9" stroke="#444" stroke-width="2"/><text x="784.6" y="96.3" font-size="10.6" fill="#111" textLength="22.4" lengthAdjust="spacingAndGlyphs">Auto</text><path d="M816.5 81.2 V114.5 M857.4 81.2 V114.5" stroke="#b5bcc8" stroke-width="1"/><rect x="827" y="87.4" width="19.9" height="21.6" rx="3" fill="#fff" stroke="#444" stroke-width="1.7"/><path d="M827.5 89 H846.5" stroke="#444" stroke-width="1.6"/><path d="M829.2 90.5 H831.6 M833.4 90.5 H838.4 M840 90.5 H845" stroke="#333" stroke-width="1.5"/><path d="M829.2 94.6 H831.6 M833.4 94.6 H838.4 M840 94.6 H845" stroke="#8a8a8a" stroke-width="1.5"/><path d="M829.2 97.6 H831.6 M833.4 97.6 H838.4 M840 97.6 H845" stroke="#444" stroke-width="1.5"/><path d="M829.2 100.4 H831.6 M833.4 100.4 H838.4 M840 100.4 H845" stroke="#333" stroke-width="1.5"/><path d="M829.2 103 H831.6 M833.4 103 H838.4 M840 103 H845" stroke="#8a8a8a" stroke-width="1.5"/><path d="M829.2 105.9 H831.6 M833.4 105.9 H838.4 M840 105.9 H845" stroke="#8a8a8a" stroke-width="1.5"/><rect x="863.9" y="82.1" width="28.1" height="30.9" fill="#b5d9ff"/><rect x="866.3" y="84.5" width="23.4" height="26.2" fill="#fff" stroke="#b4b4b4" stroke-width="1"/><path d="M868 91.5 H888 M868 96.2 H888 M868 100.5 H888 M868 105.1 H888 M870.5 86 V109.5 M875.6 86 V109.5 M880.6 86 V109.5 M885.5 86 V109.5" stroke="#e3e3e3" stroke-width="1"/><path d="M873.3 87 V93.8 H882.7 V87 M873.3 108.6 V102.5 H882.7 V108.6" fill="none" stroke="#111" stroke-width="1.3"/><rect x="903" y="84.8" width="99.6" height="25.7" fill="#fff"/><rect x="990.8" y="85.6" width="10.8" height="24" fill="#e9f0fa"/><path d="M993.3 96 H1000.1 L996.7 99.6 Z" fill="#111"/><path d="M1017.6 106.6 H1023.2" stroke="#777" stroke-width="1.1"/><path d="M1017.8 109 H1023 L1020.4 112.8 Z" fill="#777"/></g><clipPath id="cc3"><rect x="902.3" y="698.5999999999999" width="87.6" height="25.7"/></clipPath><g clip-path="url(#cc3)"><text transform="translate(905.4 712.7) scale(0.9 1.185)" y="4.25" text-anchor="start" font-size="11.8" fill="#2c2c2c" >SDC21 (LCL,LCTL</text></g><defs><clipPath id="cp3"><rect x="688.5" y="735.9" width="497.6" height="531.6"/></clipPath></defs><rect x="687.7" y="735.2" width="498.9" height="533.0" fill="#fff"/><g clip-path="url(#cp3)"><path d="M706.7 735.9V1267.5M721.2 735.9V1267.5M735.7 735.9V1267.5M750.2 735.9V1267.5M779.2 735.9V1267.5M793.7 735.9V1267.5M808.2 735.9V1267.5M822.7 735.9V1267.5M851.7 735.9V1267.5M866.2 735.9V1267.5M880.7 735.9V1267.5M895.2 735.9V1267.5M924.2 735.9V1267.5M938.7 735.9V1267.5M953.2 735.9V1267.5M967.7 735.9V1267.5M996.7 735.9V1267.5M1011.2 735.9V1267.5M1025.7 735.9V1267.5M1040.2 735.9V1267.5M1069.2 735.9V1267.5M1083.7 735.9V1267.5M1098.2 735.9V1267.5M1112.7 735.9V1267.5M1141.7 735.9V1267.5M1156.2 735.9V1267.5M1170.7 735.9V1267.5" stroke="#e6e6e6" stroke-width="0.9" stroke-dasharray="10 1.5" fill="none"/><path d="M688.5 754.7H1186.1M688.5 772.6H1186.1M688.5 808.4H1186.1M688.5 826.3H1186.1M688.5 844.2H1186.1M688.5 862.1H1186.1M688.5 898.0H1186.1M688.5 915.9H1186.1M688.5 933.8H1186.1M688.5 951.7H1186.1M688.5 987.5H1186.1M688.5 1005.4H1186.1M688.5 1023.3H1186.1M688.5 1041.2H1186.1M688.5 1077.1H1186.1M688.5 1095.0H1186.1M688.5 1112.9H1186.1M688.5 1130.8H1186.1M688.5 1166.6H1186.1M688.5 1184.5H1186.1M688.5 1202.4H1186.1M688.5 1220.3H1186.1M688.5 1256.2H1186.1" stroke="#e5e5e5" stroke-width="0.95" stroke-dasharray="3.4 1.6" fill="none"/><path d="M692.2 735.9V1267.5M764.7 735.9V1267.5M837.2 735.9V1267.5M909.7 735.9V1267.5M982.2 735.9V1267.5M1054.7 735.9V1267.5M1127.2 735.9V1267.5" stroke="#b2b2b2" stroke-width="0.9" stroke-dasharray="9 2" fill="none"/><path d="M688.5 790.5H1186.1M688.5 880.1H1186.1M688.5 969.6H1186.1M688.5 1059.2H1186.1M688.5 1148.8H1186.1M688.5 1238.4H1186.1" stroke="#bcbcbc" stroke-width="1.5" stroke-dasharray="3.4 1.6" fill="none"/><path d="M1120.9 785.4 A11.3 11.3 0 0 0 1139.9 785.4" fill="none" stroke="#7abd28" stroke-opacity="1" stroke-width="3.0" stroke-linecap="round"/><path d="M1114.7 785.4 A17.9 17.9 0 0 0 1146.1 785.4" fill="none" stroke="#c6dba0" stroke-opacity="1" stroke-width="2.1" stroke-linecap="round"/><path d="M1109.0 785.4 A24.5 24.5 0 0 0 1151.8 785.4" fill="none" stroke="#e0eacc" stroke-opacity="1" stroke-width="1.7" stroke-linecap="round"/><text x="1097.0" y="781.6" font-size="25.4" fill="#777" stroke="#777" stroke-width="0.55" textLength="78.5" lengthAdjust="spacingAndGlyphs">SEQUID</text><polygon points="695.6,733.2 1170.6,733.2 1170.6,826.3 873.8,826.3 873.8,933.3 695.6,933.3" fill="#ff0000" fill-opacity="0.15" stroke="#ff8888" stroke-width="1.5"/><path d="M700.0 1069.3C700.6 1070.5 702.5 1073.9 703.8 1076.3C705.0 1078.7 706.2 1086.5 707.5 1083.8C708.8 1081.1 710.0 1069.0 711.3 1060.0C712.5 1051.0 713.5 1037.5 715.0 1030.0C716.5 1022.5 718.3 1015.6 720.0 1015.0C721.7 1014.4 723.2 1023.0 725.0 1026.3C726.8 1029.6 728.9 1036.0 730.8 1035.0C732.7 1034.0 734.5 1026.2 736.3 1020.0C738.0 1013.8 739.8 1002.4 741.3 997.5C742.8 992.6 744.0 989.5 745.5 990.8C747.0 992.0 748.4 1000.3 750.0 1005.0C751.6 1009.7 753.3 1018.2 755.0 1018.8C756.7 1019.4 758.4 1011.7 760.0 1008.8C761.6 1005.9 762.8 1000.9 764.5 1001.3C766.2 1001.7 768.2 1007.5 770.0 1011.3C771.8 1015.0 773.4 1021.1 775.0 1023.8C776.6 1026.5 777.8 1028.8 779.5 1027.5C781.2 1026.2 783.2 1020.5 785.0 1016.3C786.8 1012.1 788.5 1005.4 790.0 1002.5C791.5 999.6 792.5 998.0 793.8 998.8C795.0 999.6 796.4 1000.6 797.5 1007.5C798.6 1014.4 799.5 1026.2 800.5 1040.0C801.5 1053.8 802.8 1073.3 803.8 1090.0C804.8 1106.7 805.5 1125.8 806.3 1140.0C807.1 1154.2 808.0 1172.5 808.8 1175.0C809.6 1177.5 810.5 1166.7 811.3 1155.0C812.1 1143.3 812.8 1122.1 813.8 1105.0C814.8 1087.9 815.9 1067.9 817.0 1052.5C818.1 1037.1 819.2 1022.7 820.5 1012.5C821.8 1002.3 823.6 993.4 825.0 991.3C826.4 989.2 827.5 995.6 828.8 1000.0C830.0 1004.4 831.2 1013.1 832.5 1017.5C833.8 1021.9 834.8 1024.8 836.3 1026.3C837.8 1027.8 839.6 1025.8 841.3 1026.3C843.0 1026.8 844.8 1030.1 846.3 1029.5C847.8 1028.9 848.8 1028.2 850.0 1022.5C851.2 1016.8 852.5 1005.0 853.8 995.0C855.0 985.0 856.3 970.4 857.5 962.5C858.7 954.6 859.8 948.3 861.0 947.5C862.2 946.7 863.7 953.1 865.0 957.5C866.3 961.9 867.5 970.7 868.8 973.8C870.0 976.9 871.2 975.9 872.5 976.3C873.8 976.7 875.0 973.6 876.3 976.3C877.5 979.0 878.8 982.7 880.0 992.5C881.2 1002.3 882.6 1024.0 883.8 1035.0C885.0 1046.0 886.0 1057.1 887.0 1058.8C888.0 1060.5 888.9 1053.5 890.0 1045.0C891.1 1036.5 892.5 1018.8 893.8 1007.5C895.0 996.2 896.2 984.6 897.5 977.5C898.8 970.4 900.5 966.1 901.8 965.0C903.0 963.9 904.0 966.4 905.0 971.0C906.0 975.6 906.8 986.4 907.8 992.5C908.8 998.6 910.1 1007.2 911.0 1007.5C911.9 1007.8 912.5 1002.8 913.4 994.4C914.3 986.0 915.3 967.5 916.3 956.9C917.2 946.3 918.1 936.5 919.1 930.6C920.1 924.7 921.4 921.3 922.3 921.6C923.2 921.9 923.8 925.7 924.7 932.5C925.6 939.3 926.6 951.9 927.5 962.5C928.4 973.1 929.4 987.7 930.3 996.3C931.2 1004.9 932.2 1012.8 933.1 1014.0C934.0 1015.2 935.0 1009.9 935.9 1003.8C936.8 997.7 937.7 986.9 938.8 977.5C939.9 968.1 941.1 955.9 942.5 947.5C943.9 939.1 945.6 931.3 947.2 926.9C948.8 922.5 950.3 920.9 951.9 920.9C953.5 920.9 955.2 923.4 956.6 926.9C958.0 930.4 959.2 937.2 960.3 941.9C961.4 946.6 962.2 952.2 963.1 955.0C964.0 957.8 964.6 959.4 965.4 958.8C966.2 958.2 966.9 955.7 967.8 951.3C968.7 946.9 969.5 939.1 970.6 932.5C971.7 925.9 973.1 916.8 974.4 911.9C975.6 907.0 976.7 905.4 978.1 903.4C979.5 901.4 981.2 902.0 982.8 899.7C984.4 897.4 985.9 892.5 987.5 889.4C989.1 886.3 990.6 882.8 992.2 880.9C993.8 879.0 995.3 878.1 996.9 878.1C998.5 878.1 1000.0 879.7 1001.6 880.9C1003.2 882.1 1004.9 885.1 1006.3 885.1C1007.7 885.1 1008.8 883.9 1010.0 880.9C1011.2 877.9 1012.5 870.6 1013.8 866.9C1015.0 863.1 1016.5 860.0 1017.5 858.4C1018.5 856.8 1018.9 856.4 1019.8 857.5C1020.7 858.6 1021.9 860.6 1023.1 865.0C1024.3 869.4 1025.7 878.2 1026.9 883.8C1028.2 889.4 1029.3 895.4 1030.6 898.8C1031.8 902.2 1033.3 904.1 1034.4 904.4C1035.5 904.7 1036.1 902.6 1037.2 900.6C1038.3 898.6 1039.8 893.9 1040.9 892.2C1042.0 890.5 1042.8 889.5 1043.8 890.3C1044.8 891.1 1045.7 893.0 1046.6 896.9C1047.5 900.8 1048.5 907.9 1049.4 913.8C1050.3 919.7 1051.3 927.8 1052.2 932.5C1053.1 937.2 1054.2 941.2 1055.0 942.3C1055.8 943.4 1056.5 941.9 1057.3 939.0C1058.1 936.1 1058.7 929.8 1059.7 925.0C1060.7 920.2 1062.3 912.8 1063.4 910.0C1064.5 907.2 1065.3 907.5 1066.3 908.1C1067.2 908.7 1068.0 909.4 1069.1 913.8C1070.2 918.2 1071.7 926.9 1072.8 934.4C1073.9 941.9 1074.8 951.0 1075.6 958.8C1076.4 966.6 1077.2 976.2 1077.9 981.3C1078.6 986.3 1079.1 989.4 1079.8 989.1C1080.5 988.8 1081.5 984.8 1082.2 979.4C1082.9 974.0 1083.3 966.9 1084.1 956.9C1084.9 946.9 1086.0 930.0 1086.9 919.4C1087.8 908.8 1088.6 900.1 1089.7 893.1C1090.8 886.1 1092.1 880.5 1093.4 877.2C1094.8 873.9 1096.4 873.1 1097.8 873.1C1099.2 873.1 1100.6 874.8 1101.9 877.2C1103.2 879.6 1104.3 882.6 1105.6 887.5C1106.8 892.4 1108.3 899.7 1109.4 906.3C1110.5 912.9 1111.3 920.3 1112.2 926.9C1113.1 933.5 1114.1 940.9 1115.0 945.6C1115.9 950.3 1116.9 954.7 1117.8 955.0C1118.7 955.3 1119.5 951.6 1120.6 947.5C1121.7 943.4 1123.2 934.8 1124.4 930.6C1125.7 926.4 1127.0 923.8 1128.1 922.2C1129.2 920.6 1129.8 920.6 1130.9 920.9C1132.0 921.2 1133.5 922.8 1134.7 924.1C1136.0 925.4 1137.2 927.8 1138.4 928.8C1139.6 929.8 1140.5 931.2 1141.6 930.3C1142.7 929.3 1143.8 925.9 1145.0 923.1C1146.2 920.4 1147.6 915.8 1148.8 913.8C1150.0 911.8 1151.0 910.6 1152.1 910.9C1153.2 911.2 1154.1 912.3 1155.3 915.6C1156.5 918.9 1157.8 924.7 1159.1 930.6C1160.3 936.5 1161.5 943.5 1162.8 951.3C1164.0 959.1 1165.4 969.4 1166.6 977.5C1167.8 985.6 1169.4 996.2 1170.0 1000.0" fill="none" stroke="#e6a010" stroke-width="2.4" stroke-linejoin="round" stroke-linecap="round"/><path d="M699.5 1235.0C699.7 1227.5 700.3 1205.8 700.8 1190.0C701.3 1174.2 701.8 1155.8 702.5 1140.0C703.2 1124.2 704.1 1107.5 705.0 1095.0C705.9 1082.5 707.0 1072.9 708.0 1065.0C709.0 1057.1 710.1 1051.6 711.3 1047.5C712.5 1043.4 713.8 1040.5 715.0 1040.5C716.2 1040.5 717.5 1042.6 718.8 1047.5C720.0 1052.4 721.2 1062.3 722.5 1070.0C723.8 1077.7 725.2 1088.9 726.3 1093.8C727.3 1098.7 727.8 1100.3 728.8 1099.3C729.8 1098.2 730.9 1092.0 732.0 1087.5C733.1 1083.0 734.5 1075.3 735.5 1072.5C736.5 1069.7 737.0 1070.2 738.0 1070.5C739.0 1070.8 740.2 1074.2 741.3 1074.5C742.4 1074.8 743.4 1075.8 744.5 1072.5C745.6 1069.2 746.9 1060.8 748.0 1055.0C749.1 1049.2 750.2 1041.5 751.3 1037.5C752.3 1033.5 753.3 1030.7 754.3 1031.3C755.3 1031.9 756.5 1037.1 757.5 1041.3C758.5 1045.5 759.6 1053.1 760.5 1056.3C761.4 1059.5 762.1 1061.5 763.0 1060.5C763.9 1059.5 764.8 1054.5 765.8 1050.0C766.8 1045.5 767.8 1037.2 768.8 1033.8C769.8 1030.3 770.5 1028.3 771.5 1029.3C772.5 1030.3 773.5 1033.6 774.5 1040.0C775.5 1046.4 776.5 1059.6 777.5 1067.5C778.5 1075.4 779.5 1086.2 780.5 1087.5C781.5 1088.8 782.3 1081.2 783.3 1075.0C784.3 1068.8 785.3 1056.9 786.3 1050.0C787.3 1043.1 788.5 1037.3 789.5 1033.8C790.5 1030.3 791.4 1029.8 792.5 1028.8C793.6 1027.8 795.1 1029.4 796.3 1027.5C797.5 1025.6 798.5 1022.1 799.5 1017.5C800.5 1012.9 801.6 1004.6 802.5 1000.0C803.4 995.4 804.2 992.2 805.0 990.0C805.8 987.8 806.6 986.2 807.5 987.0C808.4 987.8 809.5 991.4 810.5 995.0C811.5 998.6 812.8 1005.8 813.8 1008.8C814.8 1011.8 815.4 1013.6 816.3 1013.0C817.2 1012.4 818.3 1008.2 819.3 1005.0C820.3 1001.8 821.5 996.2 822.5 993.8C823.5 991.4 824.1 990.2 825.0 990.8C825.9 991.4 827.0 993.0 828.0 997.5C829.0 1002.0 830.1 1010.0 831.3 1017.5C832.5 1025.0 833.5 1035.0 835.0 1042.5C836.5 1050.0 838.5 1055.8 840.0 1062.5C841.5 1069.2 842.8 1076.9 843.8 1082.5C844.8 1088.1 845.6 1093.5 846.3 1096.3C847.0 1099.1 847.3 1101.0 848.0 1099.5C848.7 1098.0 849.7 1094.9 850.5 1087.5C851.3 1080.1 852.0 1066.7 853.0 1055.0C854.0 1043.3 855.3 1026.7 856.3 1017.5C857.3 1008.3 858.1 1003.4 858.8 1000.0C859.5 996.6 859.8 995.3 860.5 997.0C861.2 998.7 862.0 1002.8 863.0 1010.0C864.0 1017.2 865.3 1033.1 866.3 1040.0C867.3 1046.9 868.0 1050.5 868.8 1051.3C869.6 1052.1 870.5 1051.0 871.3 1045.0C872.1 1039.0 873.0 1023.5 873.8 1015.0C874.6 1006.5 875.5 998.1 876.3 993.8C877.0 989.5 877.5 987.8 878.3 989.3C879.0 990.8 879.9 995.3 880.8 1002.5C881.7 1009.7 883.0 1025.8 883.8 1032.5C884.6 1039.2 885.0 1042.5 885.8 1042.5C886.5 1042.5 887.4 1040.4 888.3 1032.5C889.2 1024.6 890.3 1006.2 891.3 995.0C892.3 983.8 893.5 971.7 894.5 965.0C895.5 958.3 896.7 956.9 897.5 955.0C898.3 953.1 898.5 952.8 899.5 953.8C900.5 954.8 902.2 959.1 903.8 961.3C905.3 963.5 907.5 964.5 908.8 967.2C910.1 969.9 910.7 971.4 911.6 977.5C912.5 983.6 913.6 994.7 914.4 1003.8C915.2 1012.9 915.9 1023.8 916.6 1031.9C917.3 1040.0 918.0 1047.9 918.5 1052.5C919.0 1057.1 919.1 1060.5 919.6 1059.6C920.1 1058.7 920.7 1056.2 921.3 1046.9C921.9 1037.6 922.5 1018.8 923.2 1003.8C923.9 988.8 924.6 970.3 925.3 956.9C926.0 943.5 926.8 931.4 927.5 923.1C928.2 914.8 929.2 910.2 929.8 907.2C930.4 904.2 930.8 904.8 931.3 905.3C931.8 905.8 932.5 905.5 933.1 910.0C933.7 914.5 934.3 922.5 935.0 932.5C935.7 942.5 936.6 956.6 937.3 970.0C938.0 983.4 938.6 1000.9 939.3 1013.1C939.9 1025.3 940.6 1036.1 941.2 1043.1C941.8 1050.0 942.2 1054.5 942.7 1054.8C943.2 1055.1 943.8 1052.9 944.4 1045.0C945.0 1037.1 945.8 1020.0 946.6 1007.5C947.4 995.0 948.4 980.6 949.4 970.0C950.4 959.4 951.8 950.4 952.8 943.8C953.8 937.2 954.8 933.3 955.6 930.6C956.5 927.9 957.1 927.5 957.9 927.8C958.7 928.1 959.4 929.5 960.3 932.5C961.2 935.5 962.2 941.5 963.1 945.6C964.0 949.7 965.0 954.5 965.9 956.9C966.8 959.3 967.8 960.6 968.8 960.3C969.8 960.0 970.5 959.0 971.6 955.0C972.7 951.0 974.0 943.8 975.3 936.3C976.5 928.8 977.9 918.8 979.1 910.0C980.4 901.2 981.5 891.3 982.8 883.8C984.0 876.3 985.4 869.7 986.6 865.0C987.9 860.3 989.0 857.7 990.3 855.6C991.6 853.5 993.1 852.4 994.4 852.4C995.6 852.4 996.6 853.5 997.8 855.6C999.0 857.7 1000.4 861.5 1001.6 865.0C1002.9 868.5 1004.1 873.7 1005.3 876.3C1006.5 878.9 1007.6 880.8 1008.7 880.6C1009.8 880.4 1010.8 878.2 1011.9 875.3C1013.0 872.4 1014.5 865.9 1015.6 863.1C1016.8 860.3 1017.7 858.4 1018.8 858.4C1019.9 858.4 1021.0 859.5 1022.2 863.1C1023.4 866.7 1024.8 874.7 1025.9 880.0C1027.1 885.3 1028.0 891.4 1029.1 895.0C1030.2 898.6 1031.3 899.9 1032.5 901.6C1033.7 903.3 1035.2 903.0 1036.3 905.3C1037.4 907.6 1038.2 911.4 1039.1 915.6C1040.0 919.8 1041.0 926.5 1041.9 930.6C1042.8 934.7 1043.9 938.2 1044.7 940.0C1045.5 941.8 1045.9 942.1 1046.6 941.5C1047.3 940.9 1048.1 939.7 1049.0 936.3C1049.9 932.9 1051.2 925.2 1052.2 921.3C1053.2 917.4 1053.9 914.8 1055.0 912.8C1056.1 910.8 1057.4 910.4 1058.8 909.6C1060.2 908.8 1062.0 909.3 1063.4 908.1C1064.8 906.9 1066.0 903.9 1067.2 902.5C1068.4 901.1 1069.4 899.4 1070.4 899.7C1071.4 900.0 1072.2 900.8 1073.2 904.4C1074.2 908.0 1075.5 915.7 1076.6 921.3C1077.7 926.9 1078.8 934.2 1079.8 938.1C1080.8 942.0 1081.7 944.7 1082.6 944.7C1083.5 944.7 1084.4 942.0 1085.4 938.1C1086.4 934.2 1087.6 926.3 1088.8 921.3C1090.0 916.3 1091.5 910.9 1092.5 908.1C1093.5 905.4 1094.0 904.5 1094.9 904.8C1095.8 905.1 1097.1 906.0 1098.1 910.0C1099.1 914.0 1100.0 919.4 1100.9 928.8C1101.8 938.2 1102.6 952.2 1103.4 966.3C1104.2 980.3 1104.9 999.4 1105.6 1013.1C1106.3 1026.8 1107.0 1040.9 1107.5 1048.8C1108.0 1056.7 1108.3 1060.3 1108.8 1060.6C1109.3 1060.9 1109.7 1058.5 1110.3 1050.6C1110.9 1042.7 1111.8 1025.3 1112.6 1013.1C1113.4 1000.9 1114.2 985.1 1115.0 977.5C1115.8 969.9 1116.6 968.5 1117.3 967.2C1118.0 966.0 1118.6 967.0 1119.3 970.0C1120.0 973.0 1120.8 979.4 1121.6 985.0C1122.3 990.6 1123.1 999.6 1123.8 1003.8C1124.5 1008.0 1125.2 1010.3 1125.9 1010.3C1126.6 1010.3 1127.3 1008.3 1128.1 1003.8C1128.9 999.3 1129.9 990.0 1130.9 983.1C1131.9 976.2 1133.0 967.8 1134.1 962.5C1135.2 957.2 1136.3 954.7 1137.5 951.3C1138.7 947.9 1140.0 946.3 1141.3 941.9C1142.5 937.5 1143.8 929.7 1145.0 925.0C1146.2 920.3 1147.5 916.0 1148.4 913.8C1149.3 911.5 1149.8 910.9 1150.6 911.5C1151.3 912.1 1152.1 912.8 1152.9 917.5C1153.7 922.2 1154.5 930.3 1155.3 940.0C1156.1 949.7 1157.0 964.7 1157.8 975.6C1158.6 986.5 1159.2 998.3 1160.0 1005.6C1160.8 1012.9 1161.5 1018.7 1162.3 1019.3C1163.1 1019.9 1163.8 1015.4 1164.7 1009.4C1165.6 1003.4 1166.6 991.2 1167.5 983.1C1168.4 975.0 1169.6 964.4 1170.0 960.6" fill="none" stroke="#3d8a0e" stroke-width="2.4" stroke-linejoin="round" stroke-linecap="round"/></g><path d="M692.2 1268.2V1260.6M764.7 1268.2V1260.6M837.2 1268.2V1260.6M909.7 1268.2V1260.6M982.2 1268.2V1260.6M1054.7 1268.2V1260.6M1127.2 1268.2V1260.6M706.7 1268.2V1264.0M721.2 1268.2V1264.0M735.7 1268.2V1264.0M750.2 1268.2V1264.0M779.2 1268.2V1264.0M793.7 1268.2V1264.0M808.2 1268.2V1264.0M822.7 1268.2V1264.0M851.7 1268.2V1264.0M866.2 1268.2V1264.0M880.7 1268.2V1264.0M895.2 1268.2V1264.0M924.2 1268.2V1264.0M938.7 1268.2V1264.0M953.2 1268.2V1264.0M967.7 1268.2V1264.0M996.7 1268.2V1264.0M1011.2 1268.2V1264.0M1025.7 1268.2V1264.0M1040.2 1268.2V1264.0M1069.2 1268.2V1264.0M1083.7 1268.2V1264.0M1098.2 1268.2V1264.0M1112.7 1268.2V1264.0M1141.7 1268.2V1264.0M1156.2 1268.2V1264.0M1170.7 1268.2V1264.0M687.7 790.5H695.3M687.7 880.1H695.3M687.7 969.6H695.3M687.7 1059.2H695.3M687.7 1148.8H695.3M687.7 1238.4H695.3M687.7 754.7H691.9M687.7 772.6H691.9M687.7 808.4H691.9M687.7 826.3H691.9M687.7 844.2H691.9M687.7 862.1H691.9M687.7 898.0H691.9M687.7 915.9H691.9M687.7 933.8H691.9M687.7 951.7H691.9M687.7 987.5H691.9M687.7 1005.4H691.9M687.7 1023.3H691.9M687.7 1041.2H691.9M687.7 1077.1H691.9M687.7 1095.0H691.9M687.7 1112.9H691.9M687.7 1130.8H691.9M687.7 1166.6H691.9M687.7 1184.5H691.9M687.7 1202.4H691.9M687.7 1220.3H691.9M687.7 1256.2H691.9" stroke="#111" stroke-width="1.2" fill="none"/><path d="M687.7 735.2H1186.6" stroke="#111" stroke-width="1.5"/><path d="M1186.6 735.2V1268.2" stroke="#111" stroke-width="1.1"/><path d="M687.7 734.5V1268.9" stroke="#111" stroke-width="1.45"/><path d="M686.9 1268.2H1187.1" stroke="#2e2e2e" stroke-width="1.4"/><text transform="translate(697.7 791.0) scale(1 1.185)" y="4.25" text-anchor="start" font-size="11.8" fill="#2c2c2c" >-30</text><text transform="translate(697.7 880.6) scale(1 1.185)" y="4.25" text-anchor="start" font-size="11.8" fill="#2c2c2c" >-40</text><text transform="translate(697.7 970.1) scale(1 1.185)" y="4.25" text-anchor="start" font-size="11.8" fill="#2c2c2c" >-50</text><text transform="translate(697.7 1059.7) scale(1 1.185)" y="4.25" text-anchor="start" font-size="11.8" fill="#2c2c2c" >-60</text><text transform="translate(697.7 1149.3) scale(1 1.185)" y="4.25" text-anchor="start" font-size="11.8" fill="#2c2c2c" >-70</text><text transform="translate(697.7 1238.9) scale(1 1.185)" y="4.25" text-anchor="start" font-size="11.8" fill="#2c2c2c" >-80</text><text transform="translate(764.7 1255.3) scale(1 1.185)" y="4.25" text-anchor="middle" font-size="11.8" fill="#2c2c2c" >0.01</text><text transform="translate(837.2 1255.3) scale(1 1.185)" y="4.25" text-anchor="middle" font-size="11.8" fill="#2c2c2c" >0.02</text><text transform="translate(909.7 1255.3) scale(1 1.185)" y="4.25" text-anchor="middle" font-size="11.8" fill="#2c2c2c" >0.03</text><text transform="translate(982.2 1255.3) scale(1 1.185)" y="4.25" text-anchor="middle" font-size="11.8" fill="#2c2c2c" >0.04</text><text transform="translate(1054.7 1255.3) scale(1 1.185)" y="4.25" text-anchor="middle" font-size="11.8" fill="#2c2c2c" >0.05</text><text transform="translate(1127.2 1255.3) scale(1 1.185)" y="4.25" text-anchor="middle" font-size="11.8" fill="#2c2c2c" >0.06</text><text transform="translate(703.9 744.0) scale(1 1.185)" y="4.25" text-anchor="start" font-size="11.8" fill="#2c2c2c" >Magnitude [dB]</text><text transform="translate(937.1 744.0) scale(1 1.185)" y="4.25" text-anchor="middle" font-size="11.8" fill="#2c2c2c" >[0.01GHz/div]</text><text transform="translate(1182.1 1237.9) scale(1 1.185)" y="4.25" text-anchor="end" font-size="11.8" fill="#2c2c2c" >f [GHz]</text><text transform="translate(699.2 783.8) rotate(90)" font-size="14" font-weight="bold" fill="#ff2c2c" textLength="37" lengthAdjust="spacingAndGlyphs">Limit</text><path d="M1190.1 744.4H1289.9" stroke="#e6a010" stroke-width="3.7"/><rect x="1204.2" y="735.8" width="72" height="20.5" rx="9" ry="9.5" fill="#f5f5f5" stroke="#e6a010" stroke-width="3.4"/><text transform="translate(1240.6 746.2) scale(1 1.185)" y="3.33" text-anchor="middle" font-size="9.25" fill="#2c2c2c" >SDC12</text><path d="M1190.1 773.5H1289.9" stroke="#3d8a0e" stroke-width="3.7"/><rect x="1204.2" y="764.9" width="72" height="20.5" rx="9" ry="9.5" fill="#f5f5f5" stroke="#3d8a0e" stroke-width="3.4"/><text transform="translate(1240.6 775.3) scale(1 1.185)" y="3.33" text-anchor="middle" font-size="9.25" fill="#2c2c2c" >SDC21</text></svg></div><div class="panel" style="left:1300.2px;top:666.8px;width:613.4px;height:606.2px"><div class="ptitle grn"><div class="t">Diagram 4</div><svg class="abs" style="left:70.7px;top:9px" width="484.7" height="8" viewBox="0 0 484.7 8"><defs><pattern id="gp8" width="4" height="4.4" patternUnits="userSpaceOnUse"><rect x="0" y="0.6" width="1.2" height="1.2" fill="#9aa0a8"/><rect x="2" y="2.8" width="1.2" height="1.2" fill="#9aa0a8"/></pattern></defs><rect width="484.7" height="7.2" fill="url(#gp8)"/></svg><svg class="abs" style="left:555.8px;top:0" width="56" height="25" viewBox="0 0 56 25"><path d="M5.6 9.3 L14.2 9.3 L9.9 14.3 Z" fill="#1a1a1a"/><path d="M24.6 6.6 H30.2 V13.6 H24.6 Z" fill="none" stroke="#1a1a1a" stroke-width="1.1"/><path d="M29.3 6.6 V13.6" stroke="#1a1a1a" stroke-width="1.8"/><path d="M23.4 13.8 H31.6 M27.4 14 V18.8" stroke="#1a1a1a" stroke-width="1.2"/><path d="M39 7.6 L48.2 16.8 M48.2 7.6 L39 16.8" stroke="#1a1a1a" stroke-width="1.5"/></svg></div><div class="abs" style="left:0;top:25px;width:613.4px;height:39.2px;background:#ebf3fd"></div><svg class="abs" style="left:-1px;top:-1px" width="613.4" height="606.2" viewBox="1300.2 666.8 613.4 606.2" font-family="Liberation Sans, sans-serif"><defs><radialGradient id="lens4" cx="0.35" cy="0.3" r="0.8"><stop offset="0" stop-color="#f4f4f4"/><stop offset="1" stop-color="#cfd2d6"/></radialGradient></defs><g transform="translate(620 614.4)"><rect x="687.2" y="84.2" width="1.8" height="1.8" fill="#5a5a5a"/><rect x="687.2" y="88.9" width="1.8" height="1.8" fill="#5a5a5a"/><rect x="687.2" y="93.3" width="1.8" height="1.8" fill="#5a5a5a"/><rect x="687.2" y="97.7" width="1.8" height="1.8" fill="#5a5a5a"/><rect x="687.2" y="102.1" width="1.8" height="1.8" fill="#5a5a5a"/><rect x="687.2" y="106.9" width="1.8" height="1.8" fill="#5a5a5a"/><rect x="695" y="86.8" width="22" height="18.8" rx="1.8" fill="#eef4fc" stroke="#3b4a5c" stroke-width="1.7"/><rect x="694.4" y="103" width="23.2" height="3.4" rx="1" fill="#3b4a5c"/><rect x="701.3" y="107.6" width="9.4" height="1.7" rx="0.8" fill="#3b4a5c"/><path d="M706.3 89.4 L708.9 92.6 H707 V99 H708.9 L706.3 102 L703.7 99 H705.6 V92.6 H703.7 Z" fill="#3b4a5c"/><path d="M698.2 95.8 L701.6 92.9 V95 H704.2 V96.6 H701.6 V98.7 Z M714.3 95.8 L710.9 92.9 V95 H708.3 V96.6 H710.9 V98.7 Z" fill="#3b4a5c"/><path d="M737.5 99.4 L743.6 109.8" stroke="#3c3c3c" stroke-width="2.4" stroke-linecap="round"/><path d="M737.1 98.6 L739.3 102.2" stroke="#9aa" stroke-width="2"/><ellipse cx="734.1" cy="91.8" rx="6.7" ry="7.1" fill="url(#lens4)" stroke="#7a92bb" stroke-width="1.2" stroke-dasharray="1.5 0.8"/><path d="M767.6 99.4 L773.7 109.8" stroke="#3c3c3c" stroke-width="2.4" stroke-linecap="round"/><path d="M767.2 98.6 L769.4 102.2" stroke="#9aa" stroke-width="2"/><ellipse cx="764.2" cy="91.8" rx="6.7" ry="7.1" fill="url(#lens4)" stroke="#7a92bb" stroke-width="1.2" stroke-dasharray="1.5 0.8"/><path d="M797.4 99.4 L803.5 109.8" stroke="#3c3c3c" stroke-width="2.4" stroke-linecap="round"/><path d="M797.0 98.6 L799.2 102.2" stroke="#9aa" stroke-width="2"/><ellipse cx="794.0" cy="91.8" rx="6.7" ry="7.1" fill="url(#lens4)" stroke="#7a92bb" stroke-width="1.2" stroke-dasharray="1.5 0.8"/><path d="M725.4 105.4 H734.4 M729.9 100.8 V109.9" stroke="#444" stroke-width="2"/><path d="M755.4 105.4 H762.9" stroke="#444" stroke-width="2"/><text x="784.6" y="96.3" font-size="10.6" fill="#111" textLength="22.4" lengthAdjust="spacingAndGlyphs">Auto</text><path d="M816.5 81.2 V114.5 M857.4 81.2 V114.5" stroke="#b5bcc8" stroke-width="1"/><rect x="827" y="87.4" width="19.9" height="21.6" rx="3" fill="#fff" stroke="#444" stroke-width="1.7"/><path d="M827.5 89 H846.5" stroke="#444" stroke-width="1.6"/><path d="M829.2 90.5 H831.6 M833.4 90.5 H838.4 M840 90.5 H845" stroke="#333" stroke-width="1.5"/><path d="M829.2 94.6 H831.6 M833.4 94.6 H838.4 M840 94.6 H845" stroke="#8a8a8a" stroke-width="1.5"/><path d="M829.2 97.6 H831.6 M833.4 97.6 H838.4 M840 97.6 H845" stroke="#444" stroke-width="1.5"/><path d="M829.2 100.4 H831.6 M833.4 100.4 H838.4 M840 100.4 H845" stroke="#333" stroke-width="1.5"/><path d="M829.2 103 H831.6 M833.4 103 H838.4 M840 103 H845" stroke="#8a8a8a" stroke-width="1.5"/><path d="M829.2 105.9 H831.6 M833.4 105.9 H838.4 M840 105.9 H845" stroke="#8a8a8a" stroke-width="1.5"/><rect x="863.9" y="82.1" width="28.1" height="30.9" fill="#b5d9ff"/><rect x="866.3" y="84.5" width="23.4" height="26.2" fill="#fff" stroke="#b4b4b4" stroke-width="1"/><path d="M868 91.5 H888 M868 96.2 H888 M868 100.5 H888 M868 105.1 H888 M870.5 86 V109.5 M875.6 86 V109.5 M880.6 86 V109.5 M885.5 86 V109.5" stroke="#e3e3e3" stroke-width="1"/><path d="M873.3 87 V93.8 H882.7 V87 M873.3 108.6 V102.5 H882.7 V108.6" fill="none" stroke="#111" stroke-width="1.3"/><rect x="903" y="84.8" width="99.6" height="25.7" fill="#fff"/><rect x="990.8" y="85.6" width="10.8" height="24" fill="#e9f0fa"/><path d="M993.3 96 H1000.1 L996.7 99.6 Z" fill="#111"/><path d="M1017.6 106.6 H1023.2" stroke="#777" stroke-width="1.1"/><path d="M1017.8 109 H1023 L1020.4 112.8 Z" fill="#777"/></g><clipPath id="cc4"><rect x="1522.2" y="698.5999999999999" width="87.6" height="25.7"/></clipPath><g clip-path="url(#cc4)"><text transform="translate(1525.4 712.7) scale(0.9 1.185)" y="4.25" text-anchor="start" font-size="11.8" fill="#2c2c2c" >SDC21 (LCL,LCTL</text></g><defs><clipPath id="cp4"><rect x="1308.5" y="735.9" width="497.8" height="531.6"/></clipPath></defs><rect x="1307.7" y="735.2" width="499.1" height="533.0" fill="#fff"/><g clip-path="url(#cp4)"><path d="M1338.0 735.9V1267.5M1352.4 735.9V1267.5M1366.8 735.9V1267.5M1381.2 735.9V1267.5M1410.0 735.9V1267.5M1424.4 735.9V1267.5M1438.8 735.9V1267.5M1453.2 735.9V1267.5M1482.0 735.9V1267.5M1496.4 735.9V1267.5M1510.8 735.9V1267.5M1525.2 735.9V1267.5M1554.0 735.9V1267.5M1568.4 735.9V1267.5M1582.8 735.9V1267.5M1597.2 735.9V1267.5M1626.0 735.9V1267.5M1640.4 735.9V1267.5M1654.8 735.9V1267.5M1669.2 735.9V1267.5M1698.0 735.9V1267.5M1712.4 735.9V1267.5M1726.8 735.9V1267.5M1741.2 735.9V1267.5M1770.0 735.9V1267.5M1784.4 735.9V1267.5M1798.8 735.9V1267.5" stroke="#e6e6e6" stroke-width="0.9" stroke-dasharray="10 1.5" fill="none"/><path d="M1308.5 749.9H1806.3M1308.5 767.8H1806.3M1308.5 803.8H1806.3M1308.5 821.7H1806.3M1308.5 839.7H1806.3M1308.5 857.7H1806.3M1308.5 893.6H1806.3M1308.5 911.6H1806.3M1308.5 929.6H1806.3M1308.5 947.5H1806.3M1308.5 983.5H1806.3M1308.5 1001.4H1806.3M1308.5 1019.4H1806.3M1308.5 1037.4H1806.3M1308.5 1073.3H1806.3M1308.5 1091.3H1806.3M1308.5 1109.3H1806.3M1308.5 1127.2H1806.3M1308.5 1163.2H1806.3M1308.5 1181.1H1806.3M1308.5 1199.1H1806.3M1308.5 1217.1H1806.3M1308.5 1253.0H1806.3" stroke="#e5e5e5" stroke-width="0.95" stroke-dasharray="3.4 1.6" fill="none"/><path d="M1323.6 735.9V1267.5M1395.6 735.9V1267.5M1467.6 735.9V1267.5M1539.6 735.9V1267.5M1611.6 735.9V1267.5M1683.6 735.9V1267.5M1755.6 735.9V1267.5" stroke="#b2b2b2" stroke-width="0.9" stroke-dasharray="9 2" fill="none"/><path d="M1308.5 785.8H1806.3M1308.5 875.8H1806.3M1308.5 965.6H1806.3M1308.5 1055.4H1806.3M1308.5 1145.2H1806.3M1308.5 1235.2H1806.3" stroke="#bcbcbc" stroke-width="1.5" stroke-dasharray="3.4 1.6" fill="none"/><path d="M1741.1 785.4 A11.3 11.3 0 0 0 1760.1 785.4" fill="none" stroke="#7abd28" stroke-opacity="1" stroke-width="3.0" stroke-linecap="round"/><path d="M1734.9 785.4 A17.9 17.9 0 0 0 1766.3 785.4" fill="none" stroke="#c6dba0" stroke-opacity="1" stroke-width="2.1" stroke-linecap="round"/><path d="M1729.2 785.4 A24.5 24.5 0 0 0 1772.0 785.4" fill="none" stroke="#e0eacc" stroke-opacity="1" stroke-width="1.7" stroke-linecap="round"/><text x="1717.2" y="781.6" font-size="25.4" fill="#777" stroke="#777" stroke-width="0.55" textLength="78.5" lengthAdjust="spacingAndGlyphs">SEQUID</text><polygon points="1326.3,733.2 1799.2,733.2 1799.2,821.5 1503.4,821.5 1503.4,929.4 1326.3,929.4" fill="#ff0000" fill-opacity="0.15" stroke="#ff8888" stroke-width="1.5"/><path d="M1330.6 1127.5C1331.1 1124.4 1332.6 1116.9 1333.8 1108.8C1335.0 1100.7 1336.2 1088.8 1337.5 1078.8C1338.8 1068.8 1340.1 1057.2 1341.3 1048.8C1342.5 1040.3 1343.7 1032.6 1344.6 1028.1C1345.5 1023.6 1346.2 1022.9 1346.9 1021.6C1347.6 1020.3 1348.1 1020.0 1348.8 1020.3C1349.5 1020.6 1350.2 1020.9 1351.0 1023.4C1351.8 1026.0 1352.6 1030.8 1353.4 1035.6C1354.2 1040.4 1355.0 1046.5 1355.7 1052.5C1356.4 1058.5 1357.1 1066.3 1357.8 1071.3C1358.5 1076.3 1359.3 1080.2 1360.0 1082.5C1360.7 1084.8 1361.2 1085.6 1361.9 1085.3C1362.6 1085.0 1363.2 1083.2 1364.1 1080.6C1365.0 1077.9 1366.2 1072.8 1367.5 1069.4C1368.8 1066.0 1370.3 1063.1 1372.2 1060.0C1374.1 1056.9 1376.6 1053.4 1378.8 1050.6C1381.0 1047.8 1383.3 1045.6 1385.3 1043.1C1387.3 1040.6 1389.3 1038.7 1390.9 1035.6C1392.5 1032.5 1393.5 1028.8 1394.7 1024.4C1396.0 1020.0 1397.2 1013.8 1398.4 1009.4C1399.7 1005.0 1401.0 1000.5 1402.2 998.1C1403.5 995.7 1404.7 994.9 1405.9 994.8C1407.1 994.6 1408.2 995.1 1409.3 997.2C1410.4 999.3 1411.5 1003.0 1412.5 1007.5C1413.5 1012.0 1414.4 1018.2 1415.3 1024.4C1416.2 1030.7 1417.0 1039.4 1417.8 1045.0C1418.6 1050.6 1419.2 1054.7 1420.0 1058.1C1420.8 1061.5 1421.9 1064.6 1422.8 1065.6C1423.7 1066.5 1424.7 1064.9 1425.6 1063.8C1426.5 1062.7 1427.5 1060.0 1428.4 1059.1C1429.4 1058.1 1430.2 1057.8 1431.3 1058.1C1432.4 1058.4 1433.8 1059.3 1435.0 1060.9C1436.2 1062.5 1437.5 1065.2 1438.8 1067.5C1440.0 1069.8 1441.3 1071.9 1442.5 1075.0C1443.7 1078.1 1444.9 1081.9 1445.9 1086.3C1446.9 1090.7 1447.7 1096.3 1448.5 1101.3C1449.3 1106.3 1450.2 1112.4 1450.9 1116.3C1451.6 1120.2 1452.2 1123.0 1452.8 1124.7C1453.4 1126.4 1454.1 1126.7 1454.7 1126.2C1455.3 1125.7 1455.9 1125.4 1456.6 1121.9C1457.3 1118.4 1458.2 1111.9 1459.0 1105.0C1459.8 1098.1 1460.7 1088.7 1461.6 1080.6C1462.5 1072.5 1463.6 1062.2 1464.6 1056.3C1465.6 1050.4 1466.8 1047.7 1467.8 1045.0C1468.8 1042.3 1469.8 1041.1 1470.6 1040.3C1471.4 1039.5 1471.7 1039.1 1472.5 1039.9C1473.3 1040.7 1474.4 1043.0 1475.3 1045.0C1476.2 1047.0 1477.3 1050.8 1478.1 1052.1C1478.9 1053.4 1479.3 1053.8 1480.0 1053.1C1480.7 1052.4 1481.5 1050.7 1482.3 1047.8C1483.1 1044.9 1483.9 1039.5 1484.7 1035.6C1485.5 1031.7 1486.4 1026.8 1487.1 1024.4C1487.8 1022.0 1488.3 1020.9 1489.0 1021.2C1489.7 1021.5 1490.5 1022.3 1491.3 1026.3C1492.1 1030.3 1492.9 1038.8 1493.7 1045.0C1494.5 1051.2 1495.2 1059.6 1495.9 1063.8C1496.6 1068.0 1497.2 1070.3 1497.8 1070.3C1498.4 1070.3 1499.1 1068.6 1499.7 1063.8C1500.3 1059.0 1500.9 1050.0 1501.6 1041.3C1502.3 1032.5 1503.3 1019.4 1504.0 1011.3C1504.7 1003.2 1505.3 996.6 1505.9 992.5C1506.5 988.4 1507.1 986.7 1507.8 986.9C1508.5 987.1 1509.3 989.6 1510.2 993.8C1511.1 998.0 1512.3 1007.3 1513.2 1012.0C1514.1 1016.7 1515.0 1021.5 1515.8 1022.2C1516.6 1022.9 1517.4 1020.8 1518.3 1016.1C1519.2 1011.4 1520.0 1000.9 1520.9 993.8C1521.8 986.7 1522.9 977.8 1523.8 973.4C1524.7 969.0 1525.5 967.6 1526.4 967.3C1527.3 967.0 1528.0 968.7 1529.0 971.4C1530.0 974.1 1531.1 979.9 1532.1 983.6C1533.1 987.3 1534.1 991.8 1534.9 993.8C1535.7 995.8 1536.2 996.5 1537.0 995.8C1537.8 995.1 1538.5 993.1 1539.6 989.7C1540.7 986.3 1542.3 979.9 1543.7 975.5C1545.1 971.1 1546.4 966.3 1547.7 963.3C1549.0 960.2 1550.4 957.9 1551.8 957.2C1553.2 956.5 1554.6 957.9 1555.9 959.2C1557.2 960.6 1558.6 963.4 1559.9 965.3C1561.2 967.2 1562.8 969.4 1564.0 970.4C1565.2 971.4 1566.0 971.9 1567.0 971.0C1568.0 970.1 1569.1 968.3 1570.1 965.3C1571.1 962.3 1572.0 957.2 1573.1 953.1C1574.2 949.0 1575.6 944.0 1576.8 940.9C1578.0 937.8 1579.0 937.2 1580.2 934.8C1581.5 932.4 1583.1 930.1 1584.3 926.7C1585.5 923.3 1586.3 919.2 1587.3 914.5C1588.3 909.8 1589.5 902.0 1590.4 898.3C1591.3 894.6 1592.1 893.3 1592.8 892.2C1593.5 891.1 1593.9 890.9 1594.5 891.6C1595.1 892.3 1595.8 892.8 1596.5 896.3C1597.2 899.8 1598.1 906.1 1598.9 912.5C1599.8 918.9 1600.8 929.2 1601.6 934.8C1602.4 940.4 1603.3 945.3 1604.0 946.0C1604.7 946.7 1605.2 943.5 1606.0 938.9C1606.8 934.3 1607.8 924.5 1608.7 918.6C1609.6 912.7 1610.6 906.4 1611.3 903.4C1612.0 900.4 1612.4 900.2 1613.1 900.7C1613.8 901.2 1614.5 901.7 1615.2 906.4C1615.9 911.1 1616.6 921.7 1617.4 928.8C1618.2 935.9 1619.2 944.9 1619.8 949.1C1620.4 953.3 1620.7 954.8 1621.3 954.1C1621.9 953.4 1622.6 950.6 1623.3 945.0C1624.0 939.4 1624.6 930.1 1625.3 920.6C1626.0 911.1 1626.8 897.6 1627.6 888.1C1628.4 878.6 1629.3 869.5 1630.0 863.8C1630.7 858.0 1631.3 855.6 1632.0 853.6C1632.7 851.6 1633.2 850.8 1634.1 851.6C1634.9 852.5 1635.9 855.0 1637.1 858.7C1638.3 862.4 1640.0 869.9 1641.2 873.9C1642.5 877.9 1643.7 881.1 1644.6 883.0C1645.5 884.9 1645.9 885.9 1646.7 885.1C1647.5 884.3 1648.3 881.5 1649.3 878.0C1650.3 874.5 1651.7 867.5 1652.8 863.8C1653.9 860.1 1655.1 857.3 1656.0 855.6C1656.9 853.9 1657.5 853.1 1658.4 853.6C1659.3 854.1 1660.5 856.8 1661.5 858.7C1662.5 860.6 1663.7 863.5 1664.5 864.8C1665.3 866.1 1665.8 866.8 1666.6 866.4C1667.4 866.0 1668.6 863.8 1669.6 862.7C1670.6 861.6 1671.8 859.5 1672.7 859.7C1673.6 859.9 1674.3 860.8 1675.1 863.8C1675.9 866.8 1676.5 871.6 1677.3 878.0C1678.1 884.4 1679.0 894.5 1679.8 902.3C1680.6 910.1 1681.5 919.5 1682.2 924.7C1682.9 929.9 1683.5 932.7 1684.2 933.4C1684.9 934.1 1685.7 932.6 1686.5 928.8C1687.3 925.0 1688.0 916.4 1688.9 910.5C1689.8 904.6 1691.0 897.4 1692.0 893.2C1693.0 889.0 1693.9 887.0 1695.0 885.1C1696.1 883.2 1697.3 882.0 1698.5 882.0C1699.7 882.0 1700.8 883.9 1702.1 885.1C1703.4 886.3 1704.8 887.9 1706.2 889.1C1707.6 890.3 1708.9 891.2 1710.2 892.2C1711.5 893.2 1713.1 893.5 1714.3 895.2C1715.5 896.9 1716.3 898.4 1717.3 902.3C1718.2 906.2 1719.2 911.1 1720.0 918.6C1720.8 926.1 1721.7 937.2 1722.4 947.0C1723.2 956.8 1723.9 968.7 1724.5 977.5C1725.1 986.3 1725.5 994.5 1725.9 999.8C1726.3 1005.0 1726.7 1009.0 1727.1 1009.0C1727.5 1009.0 1727.9 1006.4 1728.5 999.8C1729.1 993.2 1729.8 981.2 1730.6 969.4C1731.3 957.6 1732.3 939.6 1733.0 928.8C1733.7 918.0 1734.4 909.6 1735.0 904.4C1735.6 899.2 1736.1 898.9 1736.6 897.7C1737.1 896.5 1737.6 896.5 1738.1 897.3C1738.6 898.1 1739.1 898.1 1739.7 902.3C1740.3 906.5 1741.0 913.6 1741.7 922.7C1742.5 931.9 1743.4 947.1 1744.2 957.2C1745.0 967.4 1745.7 976.5 1746.4 983.6C1747.1 990.7 1747.8 996.3 1748.4 999.8C1749.1 1003.2 1749.5 1004.3 1750.3 1004.3C1751.0 1004.3 1752.0 1001.0 1752.9 999.8C1753.8 998.5 1754.6 997.5 1755.5 996.8C1756.4 996.1 1757.5 997.0 1758.4 995.8C1759.3 994.6 1760.2 993.4 1761.0 989.7C1761.8 986.0 1762.7 980.2 1763.5 973.4C1764.3 966.6 1765.1 957.2 1766.1 949.1C1767.0 941.0 1768.2 930.8 1769.2 924.7C1770.2 918.6 1771.2 915.0 1772.2 912.5C1773.2 910.0 1774.3 910.1 1775.2 909.5C1776.1 908.9 1776.7 908.6 1777.7 909.0C1778.7 909.4 1780.2 910.7 1781.3 912.1C1782.4 913.5 1783.5 915.2 1784.4 917.6C1785.4 920.0 1786.2 922.5 1787.0 926.7C1787.8 930.9 1788.7 935.9 1789.5 943.0C1790.3 950.1 1791.1 960.3 1791.9 969.4C1792.7 978.5 1793.4 988.3 1794.1 997.8C1794.8 1007.3 1795.6 1018.2 1796.2 1026.3C1796.8 1034.4 1797.2 1041.5 1797.6 1046.6C1798.0 1051.7 1798.4 1055.3 1798.6 1057.1" fill="none" stroke="#0a8cff" stroke-width="2.4" stroke-linejoin="round" stroke-linecap="round"/><path d="M1330.6 1127.5C1331.0 1122.8 1332.0 1109.4 1332.8 1099.4C1333.6 1089.4 1334.7 1075.9 1335.6 1067.5C1336.5 1059.1 1337.5 1053.5 1338.4 1048.8C1339.4 1044.1 1340.4 1041.4 1341.3 1039.4C1342.2 1037.5 1342.8 1036.8 1343.7 1037.1C1344.6 1037.4 1345.8 1038.4 1346.9 1041.3C1348.1 1044.2 1349.5 1050.7 1350.6 1054.4C1351.7 1058.2 1352.5 1061.6 1353.4 1063.8C1354.3 1066.0 1355.1 1068.1 1355.9 1067.5C1356.7 1066.9 1357.3 1064.4 1358.1 1060.0C1358.9 1055.6 1360.0 1047.2 1360.9 1041.3C1361.9 1035.4 1362.8 1028.9 1363.8 1024.4C1364.8 1019.9 1365.7 1016.3 1366.6 1014.1C1367.5 1011.9 1368.5 1011.5 1369.4 1011.3C1370.3 1011.1 1371.3 1012.3 1372.2 1012.8C1373.1 1013.3 1374.1 1014.6 1375.0 1014.4C1375.9 1014.1 1376.9 1012.8 1377.8 1011.3C1378.7 1009.8 1379.8 1006.8 1380.6 1005.6C1381.4 1004.4 1382.1 1003.5 1382.9 1004.3C1383.7 1005.1 1384.5 1006.0 1385.3 1010.3C1386.1 1014.6 1387.0 1023.3 1387.8 1030.0C1388.6 1036.7 1389.2 1045.3 1390.0 1050.6C1390.8 1055.8 1391.6 1061.2 1392.3 1061.5C1393.0 1061.8 1393.6 1058.7 1394.3 1052.5C1395.0 1046.3 1395.8 1033.2 1396.6 1024.4C1397.3 1015.7 1398.1 1005.8 1398.8 1000.0C1399.5 994.2 1400.1 991.8 1400.7 989.7C1401.3 987.6 1401.6 986.6 1402.2 987.4C1402.8 988.2 1403.5 989.8 1404.1 994.4C1404.7 999.0 1405.3 1007.2 1405.9 1015.0C1406.5 1022.8 1407.2 1034.1 1407.8 1041.3C1408.4 1048.5 1408.8 1054.4 1409.3 1058.1C1409.8 1061.8 1410.1 1063.7 1410.6 1063.4C1411.1 1063.1 1411.5 1061.9 1412.1 1056.3C1412.7 1050.7 1413.3 1039.4 1414.0 1030.0C1414.7 1020.6 1415.5 1007.6 1416.3 1000.0C1417.0 992.4 1417.8 987.2 1418.5 984.1C1419.2 981.0 1419.8 981.1 1420.4 981.6C1421.0 982.1 1421.7 982.9 1422.3 986.9C1422.9 990.9 1423.5 997.8 1424.1 1005.6C1424.7 1013.4 1425.4 1024.7 1426.0 1033.8C1426.6 1042.9 1427.3 1053.6 1427.9 1060.0C1428.5 1066.4 1429.2 1071.6 1429.8 1072.2C1430.4 1072.8 1431.0 1068.0 1431.6 1063.8C1432.2 1059.6 1432.8 1051.4 1433.5 1046.9C1434.2 1042.4 1435.1 1038.5 1435.8 1036.6C1436.5 1034.7 1436.9 1034.5 1437.4 1035.3C1438.0 1036.1 1438.5 1036.9 1439.1 1041.3C1439.7 1045.7 1440.4 1053.2 1441.0 1061.9C1441.6 1070.7 1442.3 1083.8 1442.9 1093.8C1443.5 1103.8 1444.2 1115.2 1444.8 1121.9C1445.4 1128.6 1445.8 1133.8 1446.3 1134.1C1446.8 1134.4 1447.2 1131.1 1447.8 1123.8C1448.3 1116.5 1449.0 1101.9 1449.6 1090.0C1450.2 1078.1 1450.8 1064.4 1451.5 1052.5C1452.2 1040.6 1453.0 1027.5 1453.8 1018.8C1454.5 1010.0 1455.2 1004.4 1456.0 1000.0C1456.8 995.6 1457.4 994.9 1458.4 992.5C1459.4 990.1 1461.0 988.7 1462.2 985.9C1463.4 983.1 1464.4 979.0 1465.4 975.6C1466.4 972.2 1467.3 967.7 1468.2 965.3C1469.1 962.9 1470.1 961.2 1471.0 961.2C1471.9 961.2 1472.5 961.6 1473.4 965.3C1474.3 968.9 1475.3 975.8 1476.3 983.1C1477.2 990.5 1478.3 1002.5 1479.1 1009.4C1479.9 1016.3 1480.7 1021.7 1481.3 1024.4C1481.9 1027.2 1482.1 1027.2 1482.8 1025.9C1483.5 1024.7 1484.4 1021.5 1485.3 1016.9C1486.2 1012.3 1487.3 1002.5 1488.1 998.1C1488.9 993.7 1489.7 991.8 1490.3 990.3C1490.9 988.8 1491.2 988.6 1491.8 989.3C1492.4 990.0 1493.2 991.0 1494.1 994.4C1494.9 997.8 1496.0 1003.8 1496.9 1009.4C1497.8 1015.0 1498.8 1022.2 1499.7 1028.1C1500.6 1034.0 1501.4 1041.5 1502.1 1045.0C1502.8 1048.5 1503.2 1049.4 1503.8 1048.8C1504.4 1048.2 1505.0 1048.9 1505.7 1041.3C1506.5 1033.7 1507.4 1016.3 1508.3 1003.0C1509.2 989.7 1510.3 972.3 1511.2 961.3C1512.1 950.3 1512.8 943.0 1513.6 936.9C1514.4 930.8 1515.0 927.5 1515.8 924.7C1516.6 921.9 1517.4 920.0 1518.3 920.0C1519.2 920.0 1520.0 921.9 1520.9 924.7C1521.9 927.5 1522.9 932.5 1524.0 936.9C1525.1 941.3 1526.2 946.7 1527.4 951.1C1528.7 955.5 1530.2 958.9 1531.5 963.3C1532.8 967.7 1533.8 971.8 1534.9 977.5C1536.0 983.2 1537.0 990.7 1538.0 997.8C1539.0 1004.9 1539.8 1014.4 1540.6 1020.2C1541.4 1026.0 1542.1 1030.0 1542.7 1032.4C1543.3 1034.8 1543.7 1035.5 1544.3 1034.8C1544.9 1034.1 1545.5 1032.8 1546.3 1028.3C1547.0 1023.8 1547.9 1016.5 1548.8 1008.0C1549.7 999.5 1550.8 986.6 1551.8 977.5C1552.8 968.4 1553.8 959.9 1554.8 953.1C1555.8 946.3 1556.9 941.0 1557.9 936.9C1558.9 932.8 1560.0 930.5 1560.9 928.8C1561.8 927.1 1562.6 926.4 1563.4 926.7C1564.2 927.0 1565.0 927.8 1566.0 930.8C1567.0 933.8 1568.1 937.9 1569.1 945.0C1570.1 952.1 1571.2 963.2 1572.1 973.4C1573.0 983.5 1573.7 995.4 1574.5 1005.9C1575.3 1016.4 1576.2 1029.0 1576.8 1036.4C1577.4 1043.9 1577.8 1047.6 1578.2 1050.6C1578.6 1053.5 1578.8 1054.4 1579.2 1054.1C1579.6 1053.8 1580.2 1052.9 1580.8 1048.6C1581.4 1044.3 1582.2 1037.4 1582.9 1028.3C1583.7 1019.2 1584.4 1005.6 1585.3 993.8C1586.2 981.9 1587.4 967.4 1588.4 957.2C1589.4 947.0 1590.4 939.6 1591.4 932.8C1592.4 926.0 1593.5 920.5 1594.5 916.6C1595.5 912.7 1596.3 911.5 1597.5 909.5C1598.7 907.5 1600.4 905.9 1601.6 904.4C1602.8 902.9 1603.4 903.0 1604.6 900.3C1605.8 897.6 1607.3 891.8 1608.7 888.1C1610.1 884.4 1611.5 880.5 1612.7 878.0C1613.9 875.5 1614.9 874.0 1615.8 872.9C1616.7 871.8 1617.3 871.2 1618.2 871.5C1619.1 871.8 1620.0 871.8 1620.9 874.9C1621.9 878.0 1623.0 885.0 1623.9 890.2C1624.8 895.5 1625.6 902.9 1626.3 906.4C1627.0 909.9 1627.4 911.1 1628.0 911.1C1628.6 911.1 1629.3 910.9 1630.0 906.4C1630.7 901.9 1631.2 893.2 1632.0 884.1C1632.8 875.0 1634.2 859.9 1635.1 851.6C1636.0 843.3 1636.8 837.9 1637.5 834.3C1638.2 830.7 1638.8 829.8 1639.5 829.8C1640.2 829.8 1640.9 830.7 1641.6 834.3C1642.3 837.9 1643.1 844.0 1643.8 851.6C1644.5 859.2 1645.1 870.9 1645.8 880.0C1646.5 889.1 1647.2 900.1 1647.9 906.4C1648.6 912.7 1649.2 916.9 1649.9 917.6C1650.6 918.3 1651.2 915.1 1651.9 910.5C1652.7 905.9 1653.5 896.6 1654.4 890.2C1655.3 883.8 1656.4 876.1 1657.4 871.9C1658.4 867.7 1659.5 865.5 1660.5 864.8C1661.5 864.1 1662.5 865.6 1663.5 867.8C1664.5 870.0 1665.5 873.6 1666.6 878.0C1667.7 882.4 1669.1 889.6 1670.2 894.2C1671.3 898.8 1672.3 903.1 1673.1 905.4C1673.9 907.7 1674.3 908.3 1675.1 908.0C1675.9 907.7 1676.8 905.7 1677.7 903.4C1678.6 901.1 1679.6 896.1 1680.4 894.2C1681.2 892.3 1681.7 891.4 1682.4 891.8C1683.1 892.1 1683.7 892.5 1684.4 896.3C1685.2 900.1 1686.1 908.1 1686.9 914.5C1687.7 920.9 1688.6 929.7 1689.3 934.8C1690.0 939.9 1690.8 943.0 1691.3 945.0C1691.8 947.0 1692.0 947.3 1692.6 946.6C1693.1 945.9 1693.9 944.9 1694.6 940.9C1695.3 936.9 1696.1 928.8 1697.0 922.7C1697.9 916.6 1699.2 908.5 1700.1 904.4C1701.0 900.3 1701.7 898.2 1702.5 897.9C1703.3 897.5 1704.0 899.5 1704.8 902.3C1705.6 905.1 1706.4 910.6 1707.2 914.5C1708.0 918.4 1708.8 923.2 1709.6 925.7C1710.3 928.2 1710.9 929.6 1711.7 929.4C1712.5 929.2 1713.4 927.5 1714.3 924.7C1715.2 921.9 1716.3 916.2 1717.3 912.5C1718.3 908.8 1719.2 904.6 1720.4 902.3C1721.6 900.0 1723.2 898.5 1724.5 898.7C1725.8 898.9 1727.2 901.1 1728.5 903.4C1729.8 905.7 1731.4 910.4 1732.6 912.5C1733.8 914.6 1734.6 916.2 1735.6 916.2C1736.6 916.2 1737.7 914.5 1738.7 912.5C1739.7 910.5 1740.7 906.1 1741.7 904.4C1742.7 902.7 1743.8 901.6 1744.8 902.3C1745.8 903.0 1746.8 905.3 1747.8 908.4C1748.8 911.5 1749.9 916.9 1750.9 920.6C1751.9 924.3 1753.1 928.7 1753.9 930.8C1754.7 932.9 1755.1 933.7 1755.9 933.2C1756.8 932.7 1758.0 930.3 1759.0 927.7C1760.0 925.1 1761.0 920.6 1762.0 917.6C1763.0 914.6 1764.1 911.2 1765.1 909.5C1766.0 907.8 1766.8 906.9 1767.7 907.4C1768.6 907.9 1769.3 908.3 1770.2 912.5C1771.1 916.7 1772.3 925.0 1773.2 932.8C1774.1 940.6 1775.0 951.4 1775.8 959.2C1776.6 967.0 1777.2 974.5 1777.9 979.5C1778.6 984.5 1779.1 989.6 1779.7 989.3C1780.3 989.0 1781.0 984.2 1781.7 977.5C1782.4 970.8 1783.1 958.6 1783.8 949.1C1784.5 939.6 1785.3 927.7 1786.0 920.6C1786.7 913.5 1787.3 909.1 1788.0 906.4C1788.7 903.7 1789.2 903.7 1789.9 904.4C1790.6 905.1 1791.2 905.1 1791.9 910.5C1792.6 915.9 1793.2 925.7 1793.9 936.9C1794.6 948.1 1795.4 965.0 1796.0 977.5C1796.6 990.0 1797.1 1002.9 1797.6 1012.0C1798.1 1021.1 1798.8 1029.0 1799.0 1032.4" fill="none" stroke="#0404ee" stroke-width="2.4" stroke-linejoin="round" stroke-linecap="round"/></g><path d="M1323.6 1268.2V1260.6M1395.6 1268.2V1260.6M1467.6 1268.2V1260.6M1539.6 1268.2V1260.6M1611.6 1268.2V1260.6M1683.6 1268.2V1260.6M1755.6 1268.2V1260.6M1338.0 1268.2V1264.0M1352.4 1268.2V1264.0M1366.8 1268.2V1264.0M1381.2 1268.2V1264.0M1410.0 1268.2V1264.0M1424.4 1268.2V1264.0M1438.8 1268.2V1264.0M1453.2 1268.2V1264.0M1482.0 1268.2V1264.0M1496.4 1268.2V1264.0M1510.8 1268.2V1264.0M1525.2 1268.2V1264.0M1554.0 1268.2V1264.0M1568.4 1268.2V1264.0M1582.8 1268.2V1264.0M1597.2 1268.2V1264.0M1626.0 1268.2V1264.0M1640.4 1268.2V1264.0M1654.8 1268.2V1264.0M1669.2 1268.2V1264.0M1698.0 1268.2V1264.0M1712.4 1268.2V1264.0M1726.8 1268.2V1264.0M1741.2 1268.2V1264.0M1770.0 1268.2V1264.0M1784.4 1268.2V1264.0M1798.8 1268.2V1264.0M1307.7 785.8H1315.3M1307.7 875.8H1315.3M1307.7 965.6H1315.3M1307.7 1055.4H1315.3M1307.7 1145.2H1315.3M1307.7 1235.2H1315.3M1307.7 749.9H1311.9M1307.7 767.8H1311.9M1307.7 803.8H1311.9M1307.7 821.7H1311.9M1307.7 839.7H1311.9M1307.7 857.7H1311.9M1307.7 893.6H1311.9M1307.7 911.6H1311.9M1307.7 929.6H1311.9M1307.7 947.5H1311.9M1307.7 983.5H1311.9M1307.7 1001.4H1311.9M1307.7 1019.4H1311.9M1307.7 1037.4H1311.9M1307.7 1073.3H1311.9M1307.7 1091.3H1311.9M1307.7 1109.3H1311.9M1307.7 1127.2H1311.9M1307.7 1163.2H1311.9M1307.7 1181.1H1311.9M1307.7 1199.1H1311.9M1307.7 1217.1H1311.9M1307.7 1253.0H1311.9" stroke="#111" stroke-width="1.2" fill="none"/><path d="M1307.7 735.2H1806.8" stroke="#111" stroke-width="1.5"/><path d="M1806.8 735.2V1268.2" stroke="#111" stroke-width="1.1"/><path d="M1307.7 734.5V1268.9" stroke="#111" stroke-width="1.45"/><path d="M1306.9 1268.2H1807.3" stroke="#2e2e2e" stroke-width="1.4"/><text transform="translate(1317.7 786.3) scale(1 1.185)" y="4.25" text-anchor="start" font-size="11.8" fill="#2c2c2c" >-30</text><text transform="translate(1317.7 876.3) scale(1 1.185)" y="4.25" text-anchor="start" font-size="11.8" fill="#2c2c2c" >-40</text><text transform="translate(1317.7 966.1) scale(1 1.185)" y="4.25" text-anchor="start" font-size="11.8" fill="#2c2c2c" >-50</text><text transform="translate(1317.7 1055.9) scale(1 1.185)" y="4.25" text-anchor="start" font-size="11.8" fill="#2c2c2c" >-60</text><text transform="translate(1317.7 1145.7) scale(1 1.185)" y="4.25" text-anchor="start" font-size="11.8" fill="#2c2c2c" >-70</text><text transform="translate(1317.7 1235.7) scale(1 1.185)" y="4.25" text-anchor="start" font-size="11.8" fill="#2c2c2c" >-80</text><text transform="translate(1395.6 1255.3) scale(1 1.185)" y="4.25" text-anchor="middle" font-size="11.8" fill="#2c2c2c" >0.01</text><text transform="translate(1467.6 1255.3) scale(1 1.185)" y="4.25" text-anchor="middle" font-size="11.8" fill="#2c2c2c" >0.02</text><text transform="translate(1539.6 1255.3) scale(1 1.185)" y="4.25" text-anchor="middle" font-size="11.8" fill="#2c2c2c" >0.03</text><text transform="translate(1611.6 1255.3) scale(1 1.185)" y="4.25" text-anchor="middle" font-size="11.8" fill="#2c2c2c" >0.04</text><text transform="translate(1683.6 1255.3) scale(1 1.185)" y="4.25" text-anchor="middle" font-size="11.8" fill="#2c2c2c" >0.05</text><text transform="translate(1755.6 1255.3) scale(1 1.185)" y="4.25" text-anchor="middle" font-size="11.8" fill="#2c2c2c" >0.06</text><text transform="translate(1323.9 744.0) scale(1 1.185)" y="4.25" text-anchor="start" font-size="11.8" fill="#2c2c2c" >Magnitude [dB]</text><text transform="translate(1557.2 744.0) scale(1 1.185)" y="4.25" text-anchor="middle" font-size="11.8" fill="#2c2c2c" >[0.01GHz/div]</text><text transform="translate(1802.3 1237.9) scale(1 1.185)" y="4.25" text-anchor="end" font-size="11.8" fill="#2c2c2c" >f [GHz]</text><text transform="translate(1330.5 779.8) rotate(90)" font-size="14" font-weight="bold" fill="#ff2c2c" textLength="37" lengthAdjust="spacingAndGlyphs">Limit</text><path d="M1810.3 744.4H1910.1" stroke="#0a8cff" stroke-width="3.7"/><rect x="1824.4" y="735.8" width="72" height="20.5" rx="9" ry="9.5" fill="#f5f5f5" stroke="#0a8cff" stroke-width="3.4"/><text transform="translate(1860.8 746.2) scale(1 1.185)" y="3.33" text-anchor="middle" font-size="9.25" fill="#2c2c2c" >SCD12</text><path d="M1810.3 773.5H1910.1" stroke="#0404ee" stroke-width="3.7"/><rect x="1824.4" y="764.9" width="72" height="20.5" rx="9" ry="9.5" fill="#f5f5f5" stroke="#0404ee" stroke-width="3.4"/><text transform="translate(1860.8 775.3) scale(1 1.185)" y="3.33" text-anchor="middle" font-size="9.25" fill="#2c2c2c" >SCD21</text></svg></div></body></html>
